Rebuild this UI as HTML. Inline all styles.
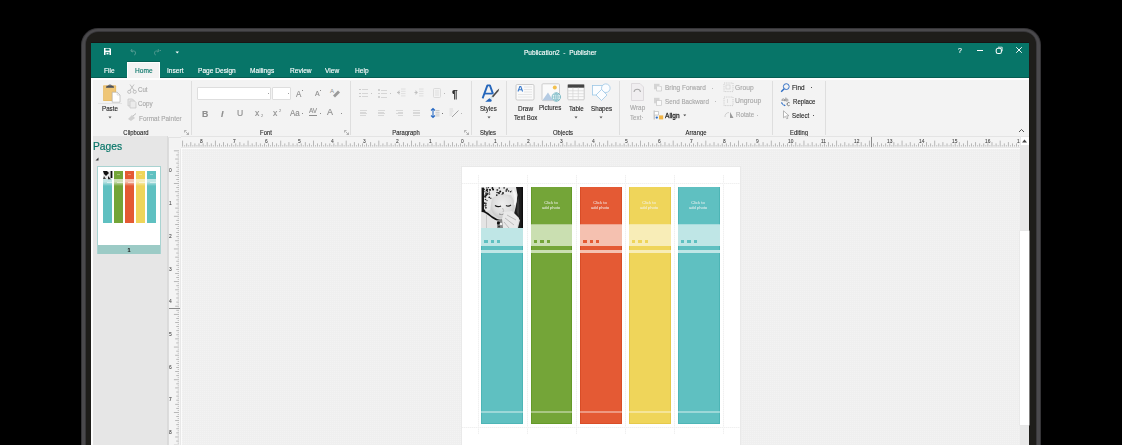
<!DOCTYPE html>
<html><head><meta charset="utf-8">
<style>
*{margin:0;padding:0;box-sizing:border-box}
html,body{width:1122px;height:445px;overflow:hidden;background:#000;font-family:"Liberation Sans",sans-serif;position:relative}
.a{position:absolute}
.t{white-space:nowrap;-webkit-text-stroke:0.018em currentColor}
svg{overflow:visible}
</style></head><body>
<div class="a" style="left:80.8px;top:27.7px;width:960px;height:600px;border-radius:17px;background:#353437"></div>
<div class="a" style="left:82px;top:28.6px;width:957.5px;height:600px;border-radius:16px;background:#4a494c;filter:blur(0.5px)"></div>
<div class="a" style="left:84.6px;top:30.6px;width:952px;height:600px;border-radius:14px;background:#38373a;filter:blur(0.4px)"></div>
<div class="a" style="left:86px;top:31.7px;width:950px;height:600px;border-radius:12px;background:#1e1d1a"></div>
<div class="a" style="left:91px;top:42px;width:938px;height:1px;background:#181514;"></div>
<div class="a" style="left:91px;top:43px;width:938px;height:402px;background:#f3f3f3;"></div>
<div class="a" style="left:91px;top:43px;width:938px;height:35px;background:#077568;"></div>
<svg class="a" style="left:104px;top:48px;" width="7" height="7" viewBox="0 0 7 7"><path d="M0 0H6L7 1V7H0Z" fill="#fff"/><rect x="1.5" y="0.6" width="4" height="2" fill="#077568"/><rect x="1.5" y="4.2" width="4" height="2.8" fill="#077568"/><rect x="2.5" y="4.8" width="2" height="1.6" fill="#fff"/></svg>
<svg class="a" style="left:130px;top:48px;" width="8" height="7" viewBox="0 0 8 7"><path d="M2 1L0.8 3L3 4M1 3H4.5A2.5 2.5 0 0 1 4.5 7H4" fill="none" stroke="#5a9e95" stroke-width="0.9"/></svg>
<svg class="a" style="left:152px;top:48px;" width="8" height="7" viewBox="0 0 8 7"><path d="M6 1L7.2 3L5 4M7 3H3.5A2.5 2.5 0 0 0 3.5 7H4" fill="none" stroke="#4f978d" stroke-width="0.9"/></svg>
<div class="a" style="left:160px;top:50px;width:1.2px;height:0.8px;background:#4f978d;"></div>
<svg class="a" style="left:175px;top:50px;" width="5" height="4" viewBox="0 0 5 4"><path d="M0.5 1.5H4L2.25 3.5Z" fill="#fff"/></svg>
<div class="a t" style="left:523.50px;top:-1.17px;font-size:65.50px;line-height:65.50px;color:#fff;transform-origin:0 55.67px;transform:scale(0.1,0.1080);">Publication2&nbsp; -&nbsp; Publisher</div>
<div class="a t" style="left:957.50px;top:-6.50px;font-size:70.00px;line-height:70.00px;color:#fff;transform-origin:0 59.50px;transform:scale(0.1,0.1080);">?</div>
<div class="a" style="left:977px;top:50px;width:6px;height:1px;background:#fff;"></div>
<svg class="a" style="left:995px;top:46px;" width="9" height="8" viewBox="0 0 9 8"><rect x="1.2" y="2.3" width="5.2" height="5.2" rx="1.8" fill="none" stroke="#fff" stroke-width="1.05"/><path d="M3 1.2H7.2V5.2" fill="none" stroke="#fff" stroke-width="0.75"/></svg>
<svg class="a" style="left:1015px;top:46px;" width="8" height="8" viewBox="0 0 8 8"><path d="M1.2 1.2L6.8 6.8M6.8 1.2L1.2 6.8" stroke="#fff" stroke-width="0.95"/></svg>
<div class="a" style="left:91px;top:77px;width:938px;height:1px;background:#065e53;"></div>
<div class="a" style="left:127px;top:61px;width:33px;height:1px;background:#066055;"></div>
<div class="a" style="left:127px;top:62px;width:33px;height:17px;background:#f3f3f3;border:1px solid #fff;border-bottom:none"></div>
<div class="a t" style="left:103.80px;top:16.60px;font-size:66.00px;line-height:66.00px;color:#fff;transform-origin:0 56.10px;transform:scale(0.1,0.1080);">File</div>
<div class="a t" style="left:134.60px;top:16.60px;font-size:66.00px;line-height:66.00px;color:#077568;transform-origin:0 56.10px;transform:scale(0.1,0.1080);">Home</div>
<div class="a t" style="left:167.40px;top:16.60px;font-size:66.00px;line-height:66.00px;color:#fff;transform-origin:0 56.10px;transform:scale(0.1,0.1080);">Insert</div>
<div class="a t" style="left:198.40px;top:16.60px;font-size:66.00px;line-height:66.00px;color:#fff;transform-origin:0 56.10px;transform:scale(0.1,0.1080);">Page Design</div>
<div class="a t" style="left:249.80px;top:16.60px;font-size:66.00px;line-height:66.00px;color:#fff;transform-origin:0 56.10px;transform:scale(0.1,0.1080);">Mailings</div>
<div class="a t" style="left:289.90px;top:16.60px;font-size:66.00px;line-height:66.00px;color:#fff;transform-origin:0 56.10px;transform:scale(0.1,0.1080);">Review</div>
<div class="a t" style="left:325.40px;top:16.60px;font-size:66.00px;line-height:66.00px;color:#fff;transform-origin:0 56.10px;transform:scale(0.1,0.1080);">View</div>
<div class="a t" style="left:354.80px;top:16.60px;font-size:66.00px;line-height:66.00px;color:#fff;transform-origin:0 56.10px;transform:scale(0.1,0.1080);">Help</div>
<div class="a" style="left:91px;top:78px;width:938px;height:58px;background:#f3f3f3;"></div>
<div class="a" style="left:91px;top:78px;width:938px;height:1.5px;background:#fdfdfd;"></div>
<div class="a" style="left:91px;top:78px;width:2px;height:367px;background:#fdfdfd;"></div>
<div class="a" style="left:191px;top:81px;width:1px;height:54px;background:#dedede;"></div>
<div class="a" style="left:350px;top:81px;width:1px;height:54px;background:#dedede;"></div>
<div class="a" style="left:471px;top:81px;width:1px;height:54px;background:#dedede;"></div>
<div class="a" style="left:506px;top:81px;width:1px;height:54px;background:#dedede;"></div>
<div class="a" style="left:619px;top:81px;width:1px;height:54px;background:#dedede;"></div>
<div class="a" style="left:772px;top:81px;width:1px;height:54px;background:#dedede;"></div>
<div class="a" style="left:825px;top:81px;width:1px;height:54px;background:#dedede;"></div>
<div class="a t" style="left:-863.70px;width:2000px;text-align:center;top:84.75px;font-size:59.00px;line-height:59.00px;color:#262626;transform-origin:1000px 50.15px;transform:scale(0.1,0.1080);">Clipboard</div>
<div class="a t" style="left:-734.00px;width:2000px;text-align:center;top:84.75px;font-size:59.00px;line-height:59.00px;color:#262626;transform-origin:1000px 50.15px;transform:scale(0.1,0.1080);">Font</div>
<div class="a t" style="left:-594.50px;width:2000px;text-align:center;top:84.75px;font-size:59.00px;line-height:59.00px;color:#262626;transform-origin:1000px 50.15px;transform:scale(0.1,0.1080);">Paragraph</div>
<div class="a t" style="left:-511.70px;width:2000px;text-align:center;top:84.75px;font-size:59.00px;line-height:59.00px;color:#262626;transform-origin:1000px 50.15px;transform:scale(0.1,0.1080);">Styles</div>
<div class="a t" style="left:-437.20px;width:2000px;text-align:center;top:84.75px;font-size:59.00px;line-height:59.00px;color:#262626;transform-origin:1000px 50.15px;transform:scale(0.1,0.1080);">Objects</div>
<div class="a t" style="left:-304.50px;width:2000px;text-align:center;top:84.75px;font-size:59.00px;line-height:59.00px;color:#262626;transform-origin:1000px 50.15px;transform:scale(0.1,0.1080);">Arrange</div>
<div class="a t" style="left:-201.20px;width:2000px;text-align:center;top:84.75px;font-size:59.00px;line-height:59.00px;color:#262626;transform-origin:1000px 50.15px;transform:scale(0.1,0.1080);">Editing</div>
<svg class="a" style="left:184px;top:130px;" width="5" height="5" viewBox="0 0 5 5"><path d="M0.5 0.5H2.5M0.5 0.5V2.5M4.5 4.5L1.5 1.5M4.5 2.5V4.5H2.5" fill="none" stroke="#8a8a8a" stroke-width="0.6"/></svg>
<svg class="a" style="left:344px;top:130px;" width="5" height="5" viewBox="0 0 5 5"><path d="M0.5 0.5H2.5M0.5 0.5V2.5M4.5 4.5L1.5 1.5M4.5 2.5V4.5H2.5" fill="none" stroke="#8a8a8a" stroke-width="0.6"/></svg>
<svg class="a" style="left:464px;top:130px;" width="5" height="5" viewBox="0 0 5 5"><path d="M0.5 0.5H2.5M0.5 0.5V2.5M4.5 4.5L1.5 1.5M4.5 2.5V4.5H2.5" fill="none" stroke="#8a8a8a" stroke-width="0.6"/></svg>
<svg class="a" style="left:1018px;top:128px;" width="7" height="5" viewBox="0 0 7 5"><path d="M1 4L3.5 1.5L6 4" fill="none" stroke="#444" stroke-width="0.9"/></svg>
<svg class="a" style="left:102px;top:82px;" width="20" height="22" viewBox="0 0 20 22"><rect x="1.3" y="3.6" width="12.8" height="15.4" rx="0.6" fill="#efc677"/><rect x="1.6" y="3.9" width="12.2" height="14.8" fill="none" stroke="#e2b35c" stroke-width="0.5"/><path d="M3.9 5.8L4.6 3.8H6.2A1.9 1.9 0 0 1 9.8 3.8H11.4L12.1 5.8Z" fill="#4a4f5a"/><circle cx="8" cy="3" r="0.5" fill="#e8e8e8"/><path d="M10.2 10.2H15.2L18 13V20.2H10.2Z" fill="#fff" stroke="#a8a8a8" stroke-width="0.6"/><path d="M15.2 10.2V13H18" fill="none" stroke="#bbb" stroke-width="0.5"/></svg>
<div class="a" style="left:98px;top:103px;width:24px;height:1px;background:#e4e4e4;"></div>
<div class="a t" style="left:102.20px;top:58.10px;font-size:62.00px;line-height:62.00px;color:#262626;transform-origin:0 52.70px;transform:scale(0.1,0.1080);">Paste</div>
<svg class="a" style="left:107.5px;top:115.5px;" width="4" height="3" viewBox="0 0 4 3"><path d="M0.5 0.5H3.5L2 2.5Z" fill="#555"/></svg>
<svg class="a" style="left:127px;top:84px;" width="10" height="10" viewBox="0 0 10 10"><path d="M3 0.5L7.5 7M7 0.5L2.5 7" stroke="#b4b4b4" stroke-width="0.8" fill="none"/><circle cx="2.3" cy="7.8" r="1.6" fill="none" stroke="#b4b4b4" stroke-width="0.8"/><circle cx="7.7" cy="7.8" r="1.6" fill="none" stroke="#b4b4b4" stroke-width="0.8"/></svg>
<div class="a t" style="left:138.40px;top:39.65px;font-size:61.00px;line-height:61.00px;color:#a8a8a8;transform-origin:0 51.85px;transform:scale(0.1,0.1080);">Cut</div>
<svg class="a" style="left:127px;top:98px;" width="10" height="11" viewBox="0 0 10 11"><path d="M1 1H5.5L7 2.5V8H1Z" fill="#e6e6e6" stroke="#c4c4c4" stroke-width="0.7"/><path d="M3 3H7.5L9 4.5V10H3Z" fill="#ececec" stroke="#c4c4c4" stroke-width="0.7"/></svg>
<div class="a t" style="left:138.40px;top:52.95px;font-size:63.00px;line-height:63.00px;color:#a8a8a8;transform-origin:0 53.55px;transform:scale(0.1,0.1080);">Copy</div>
<svg class="a" style="left:127px;top:113px;" width="10" height="9" viewBox="0 0 10 9"><path d="M1 6L5 2L8 5L4 8Z" fill="#d0d0d0"/><path d="M6 3L9 0.5" stroke="#b8b8b8" stroke-width="0.9"/></svg>
<div class="a t" style="left:138.80px;top:66.18px;font-size:64.50px;line-height:64.50px;color:#a8a8a8;transform-origin:0 54.82px;transform:scale(0.1,0.1080);">Format Painter</div>
<div class="a" style="left:196.5px;top:87px;width:74px;height:13px;background:#fff;border:1px solid #dedede;border-radius:1px"></div>
<div class="a" style="left:271.5px;top:87px;width:19px;height:13px;background:#fff;border:1px solid #dedede;border-radius:1px"></div>
<div class="a" style="left:268.3px;top:92.6px;width:1px;height:1px;background:#a0a0a0;"></div>
<div class="a" style="left:287.8px;top:92.6px;width:1px;height:1px;background:#a0a0a0;"></div>
<div class="a t" style="left:296.30px;top:28.60px;font-size:80.00px;line-height:80.00px;color:#8e8e8e;transform-origin:0 68.00px;transform:scale(0.1,0.1080);">A</div>
<div class="a" style="left:301.5px;top:89.5px;width:1.2px;height:1.2px;background:#8e8e8e;"></div>
<div class="a t" style="left:314.60px;top:37.10px;font-size:70.00px;line-height:70.00px;color:#8e8e8e;transform-origin:0 59.50px;transform:scale(0.1,0.1080);">A</div>
<div class="a" style="left:319.6px;top:89.5px;width:1.2px;height:0.8px;background:#8e8e8e;"></div>
<svg class="a" style="left:330px;top:87px;" width="11" height="10" viewBox="0 0 11 10"><text x="0" y="5.5" font-size="6" font-family="Liberation Sans" fill="#8e8e8e">A</text><path d="M3 8.5L8 3.5L10 5.5L5 10.5Z" fill="#9a9a9a"/></svg>
<div class="a t" style="left:201.80px;top:41.80px;font-size:88.00px;line-height:88.00px;color:#8e8e8e;transform-origin:0 74.80px;transform:scale(0.1,0.1080);font-weight:bold">B</div>
<div class="a t" style="left:220.60px;top:41.80px;font-size:88.00px;line-height:88.00px;color:#8e8e8e;transform-origin:0 74.80px;transform:scale(0.1,0.1080);font-style:italic;font-weight:bold">I</div>
<div class="a t" style="left:237.00px;top:43.30px;font-size:86.00px;line-height:86.00px;color:#8e8e8e;transform-origin:0 73.10px;transform:scale(0.1,0.1080);">U</div>
<div class="a t" style="left:254.70px;top:42.80px;font-size:86.00px;line-height:86.00px;color:#8e8e8e;transform-origin:0 73.10px;transform:scale(0.1,0.1080);">x</div>
<div class="a t" style="left:260.50px;top:83.00px;font-size:40.00px;line-height:40.00px;color:#8e8e8e;transform-origin:0 34.00px;transform:scale(0.1,0.1080);">2</div>
<div class="a t" style="left:273.00px;top:42.80px;font-size:86.00px;line-height:86.00px;color:#8e8e8e;transform-origin:0 73.10px;transform:scale(0.1,0.1080);">x</div>
<div class="a t" style="left:278.60px;top:77.50px;font-size:40.00px;line-height:40.00px;color:#8e8e8e;transform-origin:0 34.00px;transform:scale(0.1,0.1080);">2</div>
<div class="a t" style="left:289.80px;top:47.90px;font-size:80.00px;line-height:80.00px;color:#8e8e8e;transform-origin:0 68.00px;transform:scale(0.1,0.1080);">Aa</div>
<div class="a" style="left:301.5px;top:112.5px;width:1px;height:1px;background:#8e8e8e;"></div>
<div class="a t" style="left:309.00px;top:58.05px;font-size:65.00px;line-height:65.00px;color:#8e8e8e;transform-origin:0 55.25px;transform:scale(0.1,0.1080);">AV</div>
<div class="a" style="left:309.3px;top:114.8px;width:7.5px;height:0.8px;background:#8e8e8e;"></div>
<div class="a" style="left:320px;top:112.5px;width:1px;height:1px;background:#8e8e8e;"></div>
<div class="a t" style="left:327.40px;top:39.40px;font-size:90.00px;line-height:90.00px;color:#8e8e8e;transform-origin:0 76.50px;transform:scale(0.1,0.1080);">A</div>
<div class="a" style="left:341px;top:112.5px;width:1px;height:1px;background:#8e8e8e;"></div>
<div class="a" style="left:359.3px;top:89.0px;width:1.4px;height:1.4px;background:#cbcbcb;"></div>
<div class="a" style="left:362px;top:89.4px;width:5.5px;height:0.8px;background:#d6d6d6;"></div>
<div class="a" style="left:359.3px;top:92.5px;width:1.4px;height:1.4px;background:#cbcbcb;"></div>
<div class="a" style="left:362px;top:92.9px;width:5.5px;height:0.8px;background:#d6d6d6;"></div>
<div class="a" style="left:359.3px;top:96.0px;width:1.4px;height:1.4px;background:#cbcbcb;"></div>
<div class="a" style="left:362px;top:96.4px;width:5.5px;height:0.8px;background:#d6d6d6;"></div>
<div class="a" style="left:370.5px;top:92.6px;width:1px;height:1px;background:#c4c4c4;"></div>
<div class="a" style="left:378.3px;top:89.0px;width:1.3px;height:1.5px;background:#d0d0d0;"></div>
<div class="a" style="left:381px;top:89.6px;width:5.5px;height:0.8px;background:#d6d6d6;"></div>
<div class="a" style="left:378.3px;top:92.5px;width:1.3px;height:1.5px;background:#d0d0d0;"></div>
<div class="a" style="left:381px;top:93.1px;width:5.5px;height:0.8px;background:#d6d6d6;"></div>
<div class="a" style="left:378.3px;top:96.0px;width:1.3px;height:1.5px;background:#d0d0d0;"></div>
<div class="a" style="left:381px;top:96.6px;width:5.5px;height:0.8px;background:#d6d6d6;"></div>
<div class="a" style="left:389.5px;top:92.6px;width:1px;height:1px;background:#c4c4c4;"></div>
<svg class="a" style="left:396px;top:88px;" width="10" height="10" viewBox="0 0 10 10"><path d="M1 4.5L3.5 2V7Z" fill="#c8c8c8"/><path d="M5 1H9.5M5 3.3H9.5M5 5.6H9.5M5 7.9H9.5" stroke="#dcdcdc" stroke-width="0.9"/><path d="M1 4.5H4" stroke="#bcbcbc" stroke-width="0.9"/></svg>
<svg class="a" style="left:414px;top:88px;" width="10" height="10" viewBox="0 0 10 10"><path d="M4 4.5L1.5 2V7Z" fill="#c8c8c8"/><path d="M5 1H9.5M5 3.3H9.5M5 5.6H9.5M5 7.9H9.5" stroke="#dcdcdc" stroke-width="0.9"/><path d="M0.5 4.5H3" stroke="#bcbcbc" stroke-width="0.9"/></svg>
<svg class="a" style="left:432.5px;top:88px;" width="8" height="10" viewBox="0 0 8 10"><rect x="0.5" y="0.5" width="7" height="9" rx="1" fill="none" stroke="#d4d4d4" stroke-width="0.8"/><path d="M2 3H6M2 5H6M2 7H6" stroke="#d8d8d8" stroke-width="0.7"/></svg>
<div class="a" style="left:443.8px;top:92.6px;width:1px;height:1px;background:#b8b8b8;"></div>
<div class="a t" style="left:452.30px;top:12.50px;font-size:100.00px;line-height:100.00px;color:#2e2e2e;transform-origin:0 85.00px;transform:scale(0.1,0.1080);font-weight:bold">&para;</div>
<div class="a" style="left:360px;top:109.8px;width:7px;height:0.9px;background:#d8d8d8;"></div>
<div class="a" style="left:360px;top:111.6px;width:5.5px;height:0.9px;background:#d8d8d8;"></div>
<div class="a" style="left:360px;top:113.39999999999999px;width:7px;height:0.9px;background:#d8d8d8;"></div>
<div class="a" style="left:360px;top:115.2px;width:5.5px;height:0.9px;background:#d8d8d8;"></div>
<div class="a" style="left:377.5px;top:109.8px;width:7px;height:0.9px;background:#d8d8d8;"></div>
<div class="a" style="left:378.0px;top:111.6px;width:6px;height:0.9px;background:#d8d8d8;"></div>
<div class="a" style="left:377.5px;top:113.39999999999999px;width:7px;height:0.9px;background:#d8d8d8;"></div>
<div class="a" style="left:378.0px;top:115.2px;width:6px;height:0.9px;background:#d8d8d8;"></div>
<div class="a" style="left:396px;top:109.8px;width:7px;height:0.9px;background:#d8d8d8;"></div>
<div class="a" style="left:397.5px;top:111.6px;width:5.5px;height:0.9px;background:#d8d8d8;"></div>
<div class="a" style="left:396px;top:113.39999999999999px;width:7px;height:0.9px;background:#d8d8d8;"></div>
<div class="a" style="left:397.5px;top:115.2px;width:5.5px;height:0.9px;background:#d8d8d8;"></div>
<div class="a" style="left:413px;top:109.8px;width:7px;height:0.9px;background:#d8d8d8;"></div>
<div class="a" style="left:413px;top:111.6px;width:7px;height:0.9px;background:#d8d8d8;"></div>
<div class="a" style="left:413px;top:113.39999999999999px;width:7px;height:0.9px;background:#d8d8d8;"></div>
<div class="a" style="left:413px;top:115.2px;width:7px;height:0.9px;background:#d8d8d8;"></div>
<svg class="a" style="left:430px;top:108px;" width="13" height="10" viewBox="0 0 13 10"><path d="M3 0.5V9.5M1 2.5L3 0.5L5 2.5M1 7.5L3 9.5L5 7.5" fill="none" stroke="#2b6cc4" stroke-width="1.1"/><path d="M5.5 2.5H9.5M5.5 4.3H9.5M5.5 6.1H9.5M5.5 7.9H9.5" stroke="#c4c4c4" stroke-width="0.9"/></svg>
<div class="a" style="left:442px;top:112.5px;width:1px;height:1px;background:#777;"></div>
<svg class="a" style="left:449px;top:108px;" width="11" height="10" viewBox="0 0 11 10"><path d="M0.5 1H4M0.5 3H4.5M0.5 5H3.5M0.5 7H3" stroke="#d4d4d4" stroke-width="0.8"/><path d="M3 9L9.5 2.5" stroke="#999" stroke-width="0.9"/></svg>
<div class="a" style="left:461.2px;top:112.5px;width:1px;height:1px;background:#b8b8b8;"></div>
<svg class="a" style="left:480px;top:83px;" width="21" height="20" viewBox="0 0 21 20"><path d="M2.6 15.4L7.4 2.4H9.9L13 10.8" fill="none" stroke="#2566bb" stroke-width="1.9" stroke-linejoin="round"/><path d="M4.6 10.6H12.6" stroke="#2566bb" stroke-width="1.7"/><path d="M11.6 13.6L17.2 7.2L19.2 5.4L18.6 8L13 14.6Z" fill="#4a4a4a"/><path d="M10.2 14.2L12.6 13.6L12.4 15.6L10.8 16.2Z" fill="#cfe6ee"/><path d="M5.2 18.7L9.4 15.2L11.8 17L11.2 18.7Z" fill="#2566bb"/></svg>
<div class="a t" style="left:480.20px;top:58.52px;font-size:61.50px;line-height:61.50px;color:#262626;transform-origin:0 52.27px;transform:scale(0.1,0.1080);">Styles</div>
<svg class="a" style="left:486.5px;top:115.5px;" width="4" height="3" viewBox="0 0 4 3"><path d="M0.5 0.5H3.5L2 2.5Z" fill="#555"/></svg>
<svg class="a" style="left:515px;top:84px;" width="20" height="17" viewBox="0 0 20 17"><rect x="1" y="0.5" width="18" height="15.5" rx="1.2" fill="#fafafa" stroke="#c6c6c6" stroke-width="0.9"/><path d="M3 7.5L4.8 2.5H5.8L7.6 7.5M3.8 5.8H6.8" stroke="#3d7ccc" stroke-width="1.1" fill="none"/><path d="M9 3H17M9 5.5H17M9 8H17M3 10.5H17M3 13H17" stroke="#dcdcdc" stroke-width="0.7"/></svg>
<div class="a t" style="left:517.60px;top:55.98px;font-size:64.50px;line-height:64.50px;color:#262626;transform-origin:0 54.82px;transform:scale(0.1,0.1080);">Draw</div>
<div class="a t" style="left:513.50px;top:67.72px;font-size:60.80px;line-height:60.80px;color:#262626;transform-origin:0 51.68px;transform:scale(0.1,0.1080);">Text Box</div>
<svg class="a" style="left:541px;top:83px;" width="21" height="19" viewBox="0 0 21 19"><rect x="1" y="0.8" width="17.5" height="16.8" rx="1" fill="#fafafa" stroke="#c8c8c8" stroke-width="0.9"/><circle cx="13.8" cy="4.6" r="2" fill="#f2c04e"/><path d="M1.5 17.2L7 9.5L12 17.2Z" fill="#b4cbe3"/><circle cx="15.3" cy="14" r="4.2" fill="#f4fafb" stroke="#6fb3c0" stroke-width="0.9"/><path d="M11.3 14H19.3M15.3 10V18M12.5 11.8H18M12.5 16.2H18" stroke="#6fb3c0" stroke-width="0.6"/><ellipse cx="15.3" cy="14" rx="1.8" ry="4" fill="none" stroke="#6fb3c0" stroke-width="0.6"/></svg>
<div class="a t" style="left:539.30px;top:58.35px;font-size:61.70px;line-height:61.70px;color:#262626;transform-origin:0 52.45px;transform:scale(0.1,0.1080);">Pictures</div>
<svg class="a" style="left:567px;top:84px;" width="18" height="17" viewBox="0 0 18 17"><rect x="0.8" y="0.5" width="16.4" height="15.3" rx="0.8" fill="#fafafa" stroke="#c0c0c0" stroke-width="0.8"/><rect x="0.8" y="0.5" width="16.4" height="3.2" fill="#444"/><path d="M1 6.8H17M1 9.7H17M1 12.6H17M5.9 3.7V15.8M11.3 3.7V15.8" stroke="#d6d6d6" stroke-width="0.7"/></svg>
<div class="a t" style="left:569.00px;top:58.18px;font-size:61.90px;line-height:61.90px;color:#262626;transform-origin:0 52.62px;transform:scale(0.1,0.1080);">Table</div>
<svg class="a" style="left:573.5px;top:115.5px;" width="4" height="3" viewBox="0 0 4 3"><path d="M0.5 0.5H3.5L2 2.5Z" fill="#555"/></svg>
<svg class="a" style="left:591px;top:82px;" width="20" height="20" viewBox="0 0 20 20"><rect x="1.5" y="3.5" width="10" height="9.5" fill="#fbfdff" stroke="#9cc7e6" stroke-width="0.8"/><circle cx="14.8" cy="6.2" r="4.3" fill="#fbfdff" stroke="#9cc7e6" stroke-width="0.8"/><path d="M10.5 7.5L16 13L10.5 18.5L5 13Z" fill="#fbfdff" stroke="#9cc7e6" stroke-width="0.8"/></svg>
<div class="a t" style="left:590.80px;top:57.67px;font-size:62.50px;line-height:62.50px;color:#262626;transform-origin:0 53.12px;transform:scale(0.1,0.1080);">Shapes</div>
<svg class="a" style="left:599px;top:115.5px;" width="4" height="3" viewBox="0 0 4 3"><path d="M0.5 0.5H3.5L2 2.5Z" fill="#555"/></svg>
<svg class="a" style="left:630px;top:82px;" width="15" height="20" viewBox="0 0 15 20"><path d="M1.5 1.5H10L13.5 5V18.5H1.5Z" fill="#f0eef0" stroke="#d8d4d8" stroke-width="0.8"/><path d="M4 10A3.3 3.3 0 0 1 10.5 10" fill="none" stroke="#a9a9a9" stroke-width="1.1"/></svg>
<div class="a t" style="left:629.60px;top:56.32px;font-size:64.10px;line-height:64.10px;color:#a8a8a8;transform-origin:0 54.48px;transform:scale(0.1,0.1080);">Wrap</div>
<div class="a t" style="left:630.00px;top:66.70px;font-size:62.00px;line-height:62.00px;color:#a8a8a8;transform-origin:0 52.70px;transform:scale(0.1,0.1080);">Text</div>
<div class="a" style="left:641.5px;top:116.5px;width:1px;height:1px;background:#c0c0c0;"></div>
<svg class="a" style="left:653px;top:83px;" width="10" height="9" viewBox="0 0 10 9"><rect x="1" y="0.8" width="5.5" height="5.5" fill="#d4d4d4"/><path d="M3.5 3.5V8H8.5V3.5H6.5" fill="#f6f6f6" stroke="#c8c8c8" stroke-width="0.7"/></svg>
<div class="a t" style="left:664.50px;top:34.85px;font-size:65.00px;line-height:65.00px;color:#a8a8a8;transform-origin:0 55.25px;transform:scale(0.1,0.1080);">Bring Forward</div>
<div class="a" style="left:711.8px;top:87.5px;width:1px;height:1px;background:#bdbdbd;"></div>
<svg class="a" style="left:653px;top:97px;" width="10" height="9" viewBox="0 0 10 9"><rect x="1" y="0.8" width="5.5" height="5.5" fill="#d4d4d4"/><rect x="3.5" y="3.5" width="5" height="4.8" fill="#fafafa" stroke="#c8c8c8" stroke-width="0.7"/></svg>
<div class="a t" style="left:664.50px;top:50.51px;font-size:62.70px;line-height:62.70px;color:#a8a8a8;transform-origin:0 53.29px;transform:scale(0.1,0.1080);">Send Backward</div>
<div class="a" style="left:715px;top:101px;width:1px;height:1px;background:#bdbdbd;"></div>
<svg class="a" style="left:653px;top:110px;" width="11" height="10" viewBox="0 0 11 10"><path d="M1.2 0.5V9.5" stroke="#9a9a9a" stroke-width="0.7"/><path d="M1.8 1.5H5.5V5H1.8" fill="#fff" stroke="#b0b0b0" stroke-width="0.6"/><circle cx="3.8" cy="7.6" r="1.15" fill="#2b6cc4"/><rect x="6" y="5.4" width="4.2" height="4" fill="#f0b445"/></svg>
<div class="a t" style="left:665.00px;top:61.90px;font-size:66.00px;line-height:66.00px;color:#222;transform-origin:0 56.10px;transform:scale(0.1,0.1080);-webkit-text-stroke:0.035em #222">Align</div>
<svg class="a" style="left:683px;top:114px;" width="4" height="3" viewBox="0 0 4 3"><path d="M0.3 0.5H3.2L1.75 2.2Z" fill="#444"/></svg>
<svg class="a" style="left:723px;top:82px;" width="11" height="10" viewBox="0 0 11 10"><rect x="1" y="1" width="9" height="8.6" fill="none" stroke="#c4c4c4" stroke-width="0.8" stroke-dasharray="1.2 1"/><rect x="3" y="3" width="4" height="4" fill="none" stroke="#d0d0d0" stroke-width="0.7"/></svg>
<div class="a t" style="left:735.20px;top:32.89px;font-size:67.30px;line-height:67.30px;color:#a8a8a8;transform-origin:0 57.21px;transform:scale(0.1,0.1080);">Group</div>
<svg class="a" style="left:723px;top:96px;" width="11" height="10" viewBox="0 0 11 10"><rect x="1" y="1" width="9" height="8.6" fill="none" stroke="#c4c4c4" stroke-width="0.8" stroke-dasharray="1.2 1"/><path d="M4.5 3V7" stroke="#d0d0d0" stroke-width="0.7"/></svg>
<div class="a t" style="left:735.20px;top:45.49px;font-size:68.60px;line-height:68.60px;color:#a8a8a8;transform-origin:0 58.31px;transform:scale(0.1,0.1080);">Ungroup</div>
<svg class="a" style="left:724px;top:111px;" width="10" height="8" viewBox="0 0 10 8"><path d="M1 6A4 4 0 0 1 5 1.5" fill="none" stroke="#c0c0c0" stroke-width="0.7"/><path d="M6 1L9.5 7H6Z" fill="#9a9a9a"/></svg>
<div class="a t" style="left:735.70px;top:64.87px;font-size:61.80px;line-height:61.80px;color:#a8a8a8;transform-origin:0 52.53px;transform:scale(0.1,0.1080);">Rotate</div>
<div class="a" style="left:757px;top:114.8px;width:1px;height:1px;background:#bdbdbd;"></div>
<svg class="a" style="left:780px;top:82px;" width="11" height="11" viewBox="0 0 11 11"><circle cx="6.3" cy="4.6" r="2.9" fill="none" stroke="#2b6cc4" stroke-width="0.95"/><path d="M4.2 6.8L1.2 9.8" stroke="#2b6cc4" stroke-width="1.4"/></svg>
<div class="a t" style="left:791.70px;top:35.02px;font-size:64.80px;line-height:64.80px;color:#262626;transform-origin:0 55.08px;transform:scale(0.1,0.1080);">Find</div>
<div class="a" style="left:811px;top:87.2px;width:1.2px;height:1px;background:#555;"></div>
<svg class="a" style="left:781px;top:97px;" width="10" height="10" viewBox="0 0 10 10"><path d="M0.8 3.6Q0.8 1.8 2.4 1.8Q3.6 1.8 3.6 3.6M3.6 2.2V4.2M0.9 3.3H3.4M4.8 0.5V4.2M4.8 3.1A1.1 1.1 0 1 0 7 3.1A1.1 1.1 0 1 0 4.8 3.1" fill="none" stroke="#8a8a8a" stroke-width="0.75"/><path d="M0.8 5.6Q1.2 8.6 4 8.4" fill="none" stroke="#2b6cc4" stroke-width="0.8"/><path d="M0 6.6L0.8 5L1.8 6.6Z" fill="#2b6cc4"/><path d="M8.6 5.8A1.6 1.6 0 1 0 8.6 8.4" fill="none" stroke="#555" stroke-width="0.8"/><path d="M3.2 7.6L4.8 8.4L3.2 9.2Z" fill="#2b6cc4"/></svg>
<div class="a t" style="left:792.70px;top:52.12px;font-size:60.80px;line-height:60.80px;color:#262626;transform-origin:0 51.68px;transform:scale(0.1,0.1080);">Replace</div>
<svg class="a" style="left:782px;top:110px;" width="8" height="9" viewBox="0 0 8 9"><path d="M1.5 0.8V7.8L3.3 6.3L4.8 8.8L6 8.2L4.6 5.8H7Z" fill="#fff" stroke="#8a8a8a" stroke-width="0.6"/></svg>
<div class="a t" style="left:792.20px;top:64.78px;font-size:61.90px;line-height:61.90px;color:#262626;transform-origin:0 52.62px;transform:scale(0.1,0.1080);">Select</div>
<div class="a" style="left:812.5px;top:114.8px;width:1px;height:1px;background:#555;"></div>
<div class="a" style="left:93px;top:136px;width:74px;height:309px;background:#e6e6e6;"></div>
<div class="a" style="left:167px;top:136px;width:1px;height:309px;background:#dadada;"></div>
<div class="a t" style="left:93.40px;top:63.45px;font-size:103.00px;line-height:103.00px;color:#077568;transform-origin:0 87.55px;transform:scale(0.1,0.1100);">Pages</div>
<svg class="a" style="left:95px;top:157px;" width="4" height="4" viewBox="0 0 4 4"><path d="M3.5 0.5V3.5H0.5Z" fill="#333"/></svg>
<div class="a" style="left:97px;top:165.6px;width:63.5px;height:88.5px;border:1.2px solid #a9d3d1;background:#fff"></div>
<div class="a" style="left:98px;top:245px;width:62px;height:9px;background:#9ccbc6;"></div>
<div class="a t" style="left:-870.70px;width:2000px;text-align:center;top:204.20px;font-size:56.00px;line-height:56.00px;color:#1a1a1a;transform-origin:1000px 47.60px;transform:scale(0.1,0.1080);font-weight:bold">1</div>
<div class="a" style="left:103.10px;top:170.7px;width:9.4px;height:52px;background:#5fc0c1;"></div>
<div class="a" style="left:103.10px;top:178.8px;width:9.4px;height:7.4px;background:linear-gradient(#c0e6e6,#c0e6e6 40%,#5fc0c1);"></div>
<div class="a" style="left:106.60px;top:181.8px;width:5.5px;height:0.8px;background:#fff;opacity:.5"></div>
<div class="a" style="left:113.95px;top:170.7px;width:9.4px;height:52px;background:#74a538;"></div>
<div class="a" style="left:113.95px;top:178.8px;width:9.4px;height:7.4px;background:linear-gradient(#cde0b4,#cde0b4 40%,#74a538);"></div>
<div class="a" style="left:117.45px;top:181.8px;width:5.5px;height:0.8px;background:#fff;opacity:.5"></div>
<div class="a" style="left:116.95px;top:173.5px;width:3.4px;height:1.2px;background:rgba(255,255,255,.3);"></div>
<div class="a" style="left:124.80px;top:170.7px;width:9.4px;height:52px;background:#e45a34;"></div>
<div class="a" style="left:124.80px;top:178.8px;width:9.4px;height:7.4px;background:linear-gradient(#f5c3b2,#f5c3b2 40%,#e45a34);"></div>
<div class="a" style="left:128.30px;top:181.8px;width:5.5px;height:0.8px;background:#fff;opacity:.5"></div>
<div class="a" style="left:127.80px;top:173.5px;width:3.4px;height:1.2px;background:rgba(255,255,255,.3);"></div>
<div class="a" style="left:135.65px;top:170.7px;width:9.4px;height:52px;background:#efd55a;"></div>
<div class="a" style="left:135.65px;top:178.8px;width:9.4px;height:7.4px;background:linear-gradient(#f8eeb9,#f8eeb9 40%,#efd55a);"></div>
<div class="a" style="left:139.15px;top:181.8px;width:5.5px;height:0.8px;background:#fff;opacity:.5"></div>
<div class="a" style="left:138.65px;top:173.5px;width:3.4px;height:1.2px;background:rgba(255,255,255,.3);"></div>
<div class="a" style="left:146.50px;top:170.7px;width:9.4px;height:52px;background:#5fc0c1;"></div>
<div class="a" style="left:146.50px;top:178.8px;width:9.4px;height:7.4px;background:linear-gradient(#c0e6e6,#c0e6e6 40%,#5fc0c1);"></div>
<div class="a" style="left:150.00px;top:181.8px;width:5.5px;height:0.8px;background:#fff;opacity:.5"></div>
<div class="a" style="left:149.50px;top:173.5px;width:3.4px;height:1.2px;background:rgba(255,255,255,.3);"></div>
<svg class="a" style="left:103px;top:170.7px;" width="9.4" height="8.2" viewBox="0 0 9.4 8.2"><rect width="9.4" height="8.2" fill="#e8e8e8"/><path d="M0 0H4L6 2L3 5L1 3Z" fill="#111"/><path d="M5 5L8 8.2H5Z" fill="#222"/><rect x="7.6" y="0" width="1.8" height="7" fill="#111"/><path d="M1 5L3 8H0Z" fill="#444"/></svg>
<div class="a" style="left:167.5px;top:136.5px;width:14px;height:13px;background:#f3f3f3;border-left:1px solid #dcdcdc;border-top:1px solid #e2e2e2;border-right:1px solid #e6e6e6;border-bottom:1px solid #e6e6e6"></div>
<div class="a" style="left:181px;top:136px;width:839px;height:1px;background:#e4e4e4;"></div>
<div class="a" style="left:181px;top:137px;width:839px;height:10px;background:#f4f4f4;"></div>
<div class="a" style="left:181px;top:147px;width:839px;height:1px;background:#e8e8e8;"></div>
<div class="a" style="left:181px;top:148px;width:839px;height:1px;background:#fbfbfb;"></div>
<div class="a" style="left:168px;top:149px;width:13px;height:296px;background:#f4f4f4;"></div>
<div class="a" style="left:167.5px;top:149px;width:1px;height:296px;background:#dcdcdc;"></div>
<div class="a" style="left:179.5px;top:149px;width:1px;height:296px;background:#e8e8e8;"></div>
<div class="a" style="left:180.5px;top:149px;width:1px;height:296px;background:#fbfbfb;"></div>
<div class="a" style="left:181.5px;top:149px;width:838.5px;height:296px;background:#eeeeee;background-image:linear-gradient(90deg,transparent 1px,#efefef 1px),linear-gradient(transparent 1px,#efefef 1px);background-size:2px 2px;background-color:#f3f3f3"></div>
<svg class="a" style="left:181px;top:136px;" width="839" height="13" viewBox="0 0 839 13"><rect x="1.25" y="4.60" width="0.8" height="6" fill="#a8a8a8"/><rect x="3.29" y="9.00" width="0.8" height="1.6" fill="#b8b8b8"/><rect x="5.34" y="7.40" width="0.8" height="3.2" fill="#a8a8a8"/><rect x="7.38" y="9.00" width="0.8" height="1.6" fill="#b8b8b8"/><rect x="9.42" y="6.10" width="0.8" height="4.5" fill="#a8a8a8"/><rect x="11.47" y="9.00" width="0.8" height="1.6" fill="#b8b8b8"/><rect x="13.51" y="7.40" width="0.8" height="3.2" fill="#a8a8a8"/><rect x="15.56" y="9.00" width="0.8" height="1.6" fill="#b8b8b8"/><rect x="17.60" y="7.40" width="0.8" height="3.2" fill="#a8a8a8"/><rect x="19.64" y="9.00" width="0.8" height="1.6" fill="#b8b8b8"/><rect x="21.69" y="7.40" width="0.8" height="3.2" fill="#a8a8a8"/><rect x="23.73" y="9.00" width="0.8" height="1.6" fill="#b8b8b8"/><rect x="25.77" y="6.10" width="0.8" height="4.5" fill="#a8a8a8"/><rect x="27.82" y="9.00" width="0.8" height="1.6" fill="#b8b8b8"/><rect x="29.86" y="7.40" width="0.8" height="3.2" fill="#a8a8a8"/><rect x="31.91" y="9.00" width="0.8" height="1.6" fill="#b8b8b8"/><rect x="33.95" y="4.60" width="0.8" height="6" fill="#a8a8a8"/><rect x="35.99" y="9.00" width="0.8" height="1.6" fill="#b8b8b8"/><rect x="38.04" y="7.40" width="0.8" height="3.2" fill="#a8a8a8"/><rect x="40.08" y="9.00" width="0.8" height="1.6" fill="#b8b8b8"/><rect x="42.12" y="6.10" width="0.8" height="4.5" fill="#a8a8a8"/><rect x="44.17" y="9.00" width="0.8" height="1.6" fill="#b8b8b8"/><rect x="46.21" y="7.40" width="0.8" height="3.2" fill="#a8a8a8"/><rect x="48.26" y="9.00" width="0.8" height="1.6" fill="#b8b8b8"/><rect x="50.30" y="7.40" width="0.8" height="3.2" fill="#a8a8a8"/><rect x="52.34" y="9.00" width="0.8" height="1.6" fill="#b8b8b8"/><rect x="54.39" y="7.40" width="0.8" height="3.2" fill="#a8a8a8"/><rect x="56.43" y="9.00" width="0.8" height="1.6" fill="#b8b8b8"/><rect x="58.47" y="6.10" width="0.8" height="4.5" fill="#a8a8a8"/><rect x="60.52" y="9.00" width="0.8" height="1.6" fill="#b8b8b8"/><rect x="62.56" y="7.40" width="0.8" height="3.2" fill="#a8a8a8"/><rect x="64.61" y="9.00" width="0.8" height="1.6" fill="#b8b8b8"/><rect x="66.65" y="4.60" width="0.8" height="6" fill="#a8a8a8"/><rect x="68.69" y="9.00" width="0.8" height="1.6" fill="#b8b8b8"/><rect x="70.74" y="7.40" width="0.8" height="3.2" fill="#a8a8a8"/><rect x="72.78" y="9.00" width="0.8" height="1.6" fill="#b8b8b8"/><rect x="74.82" y="6.10" width="0.8" height="4.5" fill="#a8a8a8"/><rect x="76.87" y="9.00" width="0.8" height="1.6" fill="#b8b8b8"/><rect x="78.91" y="7.40" width="0.8" height="3.2" fill="#a8a8a8"/><rect x="80.96" y="9.00" width="0.8" height="1.6" fill="#b8b8b8"/><rect x="83.00" y="7.40" width="0.8" height="3.2" fill="#a8a8a8"/><rect x="85.04" y="9.00" width="0.8" height="1.6" fill="#b8b8b8"/><rect x="87.09" y="7.40" width="0.8" height="3.2" fill="#a8a8a8"/><rect x="89.13" y="9.00" width="0.8" height="1.6" fill="#b8b8b8"/><rect x="91.18" y="6.10" width="0.8" height="4.5" fill="#a8a8a8"/><rect x="93.22" y="9.00" width="0.8" height="1.6" fill="#b8b8b8"/><rect x="95.26" y="7.40" width="0.8" height="3.2" fill="#a8a8a8"/><rect x="97.31" y="9.00" width="0.8" height="1.6" fill="#b8b8b8"/><rect x="99.35" y="4.60" width="0.8" height="6" fill="#a8a8a8"/><rect x="101.39" y="9.00" width="0.8" height="1.6" fill="#b8b8b8"/><rect x="103.44" y="7.40" width="0.8" height="3.2" fill="#a8a8a8"/><rect x="105.48" y="9.00" width="0.8" height="1.6" fill="#b8b8b8"/><rect x="107.52" y="6.10" width="0.8" height="4.5" fill="#a8a8a8"/><rect x="109.57" y="9.00" width="0.8" height="1.6" fill="#b8b8b8"/><rect x="111.61" y="7.40" width="0.8" height="3.2" fill="#a8a8a8"/><rect x="113.66" y="9.00" width="0.8" height="1.6" fill="#b8b8b8"/><rect x="115.70" y="7.40" width="0.8" height="3.2" fill="#a8a8a8"/><rect x="117.74" y="9.00" width="0.8" height="1.6" fill="#b8b8b8"/><rect x="119.79" y="7.40" width="0.8" height="3.2" fill="#a8a8a8"/><rect x="121.83" y="9.00" width="0.8" height="1.6" fill="#b8b8b8"/><rect x="123.88" y="6.10" width="0.8" height="4.5" fill="#a8a8a8"/><rect x="125.92" y="9.00" width="0.8" height="1.6" fill="#b8b8b8"/><rect x="127.96" y="7.40" width="0.8" height="3.2" fill="#a8a8a8"/><rect x="130.01" y="9.00" width="0.8" height="1.6" fill="#b8b8b8"/><rect x="132.05" y="4.60" width="0.8" height="6" fill="#a8a8a8"/><rect x="134.09" y="9.00" width="0.8" height="1.6" fill="#b8b8b8"/><rect x="136.14" y="7.40" width="0.8" height="3.2" fill="#a8a8a8"/><rect x="138.18" y="9.00" width="0.8" height="1.6" fill="#b8b8b8"/><rect x="140.22" y="6.10" width="0.8" height="4.5" fill="#a8a8a8"/><rect x="142.27" y="9.00" width="0.8" height="1.6" fill="#b8b8b8"/><rect x="144.31" y="7.40" width="0.8" height="3.2" fill="#a8a8a8"/><rect x="146.36" y="9.00" width="0.8" height="1.6" fill="#b8b8b8"/><rect x="148.40" y="7.40" width="0.8" height="3.2" fill="#a8a8a8"/><rect x="150.44" y="9.00" width="0.8" height="1.6" fill="#b8b8b8"/><rect x="152.49" y="7.40" width="0.8" height="3.2" fill="#a8a8a8"/><rect x="154.53" y="9.00" width="0.8" height="1.6" fill="#b8b8b8"/><rect x="156.57" y="6.10" width="0.8" height="4.5" fill="#a8a8a8"/><rect x="158.62" y="9.00" width="0.8" height="1.6" fill="#b8b8b8"/><rect x="160.66" y="7.40" width="0.8" height="3.2" fill="#a8a8a8"/><rect x="162.71" y="9.00" width="0.8" height="1.6" fill="#b8b8b8"/><rect x="164.75" y="4.60" width="0.8" height="6" fill="#a8a8a8"/><rect x="166.79" y="9.00" width="0.8" height="1.6" fill="#b8b8b8"/><rect x="168.84" y="7.40" width="0.8" height="3.2" fill="#a8a8a8"/><rect x="170.88" y="9.00" width="0.8" height="1.6" fill="#b8b8b8"/><rect x="172.92" y="6.10" width="0.8" height="4.5" fill="#a8a8a8"/><rect x="174.97" y="9.00" width="0.8" height="1.6" fill="#b8b8b8"/><rect x="177.01" y="7.40" width="0.8" height="3.2" fill="#a8a8a8"/><rect x="179.06" y="9.00" width="0.8" height="1.6" fill="#b8b8b8"/><rect x="181.10" y="7.40" width="0.8" height="3.2" fill="#a8a8a8"/><rect x="183.14" y="9.00" width="0.8" height="1.6" fill="#b8b8b8"/><rect x="185.19" y="7.40" width="0.8" height="3.2" fill="#a8a8a8"/><rect x="187.23" y="9.00" width="0.8" height="1.6" fill="#b8b8b8"/><rect x="189.27" y="6.10" width="0.8" height="4.5" fill="#a8a8a8"/><rect x="191.32" y="9.00" width="0.8" height="1.6" fill="#b8b8b8"/><rect x="193.36" y="7.40" width="0.8" height="3.2" fill="#a8a8a8"/><rect x="195.41" y="9.00" width="0.8" height="1.6" fill="#b8b8b8"/><rect x="197.45" y="4.60" width="0.8" height="6" fill="#a8a8a8"/><rect x="199.49" y="9.00" width="0.8" height="1.6" fill="#b8b8b8"/><rect x="201.54" y="7.40" width="0.8" height="3.2" fill="#a8a8a8"/><rect x="203.58" y="9.00" width="0.8" height="1.6" fill="#b8b8b8"/><rect x="205.62" y="6.10" width="0.8" height="4.5" fill="#a8a8a8"/><rect x="207.67" y="9.00" width="0.8" height="1.6" fill="#b8b8b8"/><rect x="209.71" y="7.40" width="0.8" height="3.2" fill="#a8a8a8"/><rect x="211.76" y="9.00" width="0.8" height="1.6" fill="#b8b8b8"/><rect x="213.80" y="7.40" width="0.8" height="3.2" fill="#a8a8a8"/><rect x="215.84" y="9.00" width="0.8" height="1.6" fill="#b8b8b8"/><rect x="217.89" y="7.40" width="0.8" height="3.2" fill="#a8a8a8"/><rect x="219.93" y="9.00" width="0.8" height="1.6" fill="#b8b8b8"/><rect x="221.97" y="6.10" width="0.8" height="4.5" fill="#a8a8a8"/><rect x="224.02" y="9.00" width="0.8" height="1.6" fill="#b8b8b8"/><rect x="226.06" y="7.40" width="0.8" height="3.2" fill="#a8a8a8"/><rect x="228.11" y="9.00" width="0.8" height="1.6" fill="#b8b8b8"/><rect x="230.15" y="4.60" width="0.8" height="6" fill="#a8a8a8"/><rect x="232.19" y="9.00" width="0.8" height="1.6" fill="#b8b8b8"/><rect x="234.24" y="7.40" width="0.8" height="3.2" fill="#a8a8a8"/><rect x="236.28" y="9.00" width="0.8" height="1.6" fill="#b8b8b8"/><rect x="238.32" y="6.10" width="0.8" height="4.5" fill="#a8a8a8"/><rect x="240.37" y="9.00" width="0.8" height="1.6" fill="#b8b8b8"/><rect x="242.41" y="7.40" width="0.8" height="3.2" fill="#a8a8a8"/><rect x="244.46" y="9.00" width="0.8" height="1.6" fill="#b8b8b8"/><rect x="246.50" y="7.40" width="0.8" height="3.2" fill="#a8a8a8"/><rect x="248.54" y="9.00" width="0.8" height="1.6" fill="#b8b8b8"/><rect x="250.59" y="7.40" width="0.8" height="3.2" fill="#a8a8a8"/><rect x="252.63" y="9.00" width="0.8" height="1.6" fill="#b8b8b8"/><rect x="254.68" y="6.10" width="0.8" height="4.5" fill="#a8a8a8"/><rect x="256.72" y="9.00" width="0.8" height="1.6" fill="#b8b8b8"/><rect x="258.76" y="7.40" width="0.8" height="3.2" fill="#a8a8a8"/><rect x="260.81" y="9.00" width="0.8" height="1.6" fill="#b8b8b8"/><rect x="262.85" y="4.60" width="0.8" height="6" fill="#a8a8a8"/><rect x="264.89" y="9.00" width="0.8" height="1.6" fill="#b8b8b8"/><rect x="266.94" y="7.40" width="0.8" height="3.2" fill="#a8a8a8"/><rect x="268.98" y="9.00" width="0.8" height="1.6" fill="#b8b8b8"/><rect x="271.02" y="6.10" width="0.8" height="4.5" fill="#a8a8a8"/><rect x="273.07" y="9.00" width="0.8" height="1.6" fill="#b8b8b8"/><rect x="275.11" y="7.40" width="0.8" height="3.2" fill="#a8a8a8"/><rect x="277.16" y="9.00" width="0.8" height="1.6" fill="#b8b8b8"/><rect x="279.20" y="7.40" width="0.8" height="3.2" fill="#a8a8a8"/><rect x="281.24" y="9.00" width="0.8" height="1.6" fill="#b8b8b8"/><rect x="283.29" y="7.40" width="0.8" height="3.2" fill="#a8a8a8"/><rect x="285.33" y="9.00" width="0.8" height="1.6" fill="#b8b8b8"/><rect x="287.38" y="6.10" width="0.8" height="4.5" fill="#a8a8a8"/><rect x="289.42" y="9.00" width="0.8" height="1.6" fill="#b8b8b8"/><rect x="291.46" y="7.40" width="0.8" height="3.2" fill="#a8a8a8"/><rect x="293.51" y="9.00" width="0.8" height="1.6" fill="#b8b8b8"/><rect x="295.55" y="4.60" width="0.8" height="6" fill="#a8a8a8"/><rect x="297.59" y="9.00" width="0.8" height="1.6" fill="#b8b8b8"/><rect x="299.64" y="7.40" width="0.8" height="3.2" fill="#a8a8a8"/><rect x="301.68" y="9.00" width="0.8" height="1.6" fill="#b8b8b8"/><rect x="303.72" y="6.10" width="0.8" height="4.5" fill="#a8a8a8"/><rect x="305.77" y="9.00" width="0.8" height="1.6" fill="#b8b8b8"/><rect x="307.81" y="7.40" width="0.8" height="3.2" fill="#a8a8a8"/><rect x="309.86" y="9.00" width="0.8" height="1.6" fill="#b8b8b8"/><rect x="311.90" y="7.40" width="0.8" height="3.2" fill="#a8a8a8"/><rect x="313.94" y="9.00" width="0.8" height="1.6" fill="#b8b8b8"/><rect x="315.99" y="7.40" width="0.8" height="3.2" fill="#a8a8a8"/><rect x="318.03" y="9.00" width="0.8" height="1.6" fill="#b8b8b8"/><rect x="320.07" y="6.10" width="0.8" height="4.5" fill="#a8a8a8"/><rect x="322.12" y="9.00" width="0.8" height="1.6" fill="#b8b8b8"/><rect x="324.16" y="7.40" width="0.8" height="3.2" fill="#a8a8a8"/><rect x="326.21" y="9.00" width="0.8" height="1.6" fill="#b8b8b8"/><rect x="328.25" y="4.60" width="0.8" height="6" fill="#a8a8a8"/><rect x="330.29" y="9.00" width="0.8" height="1.6" fill="#b8b8b8"/><rect x="332.34" y="7.40" width="0.8" height="3.2" fill="#a8a8a8"/><rect x="334.38" y="9.00" width="0.8" height="1.6" fill="#b8b8b8"/><rect x="336.42" y="6.10" width="0.8" height="4.5" fill="#a8a8a8"/><rect x="338.47" y="9.00" width="0.8" height="1.6" fill="#b8b8b8"/><rect x="340.51" y="7.40" width="0.8" height="3.2" fill="#a8a8a8"/><rect x="342.56" y="9.00" width="0.8" height="1.6" fill="#b8b8b8"/><rect x="344.60" y="7.40" width="0.8" height="3.2" fill="#a8a8a8"/><rect x="346.64" y="9.00" width="0.8" height="1.6" fill="#b8b8b8"/><rect x="348.69" y="7.40" width="0.8" height="3.2" fill="#a8a8a8"/><rect x="350.73" y="9.00" width="0.8" height="1.6" fill="#b8b8b8"/><rect x="352.77" y="6.10" width="0.8" height="4.5" fill="#a8a8a8"/><rect x="354.82" y="9.00" width="0.8" height="1.6" fill="#b8b8b8"/><rect x="356.86" y="7.40" width="0.8" height="3.2" fill="#a8a8a8"/><rect x="358.91" y="9.00" width="0.8" height="1.6" fill="#b8b8b8"/><rect x="360.95" y="4.60" width="0.8" height="6" fill="#a8a8a8"/><rect x="362.99" y="9.00" width="0.8" height="1.6" fill="#b8b8b8"/><rect x="365.04" y="7.40" width="0.8" height="3.2" fill="#a8a8a8"/><rect x="367.08" y="9.00" width="0.8" height="1.6" fill="#b8b8b8"/><rect x="369.12" y="6.10" width="0.8" height="4.5" fill="#a8a8a8"/><rect x="371.17" y="9.00" width="0.8" height="1.6" fill="#b8b8b8"/><rect x="373.21" y="7.40" width="0.8" height="3.2" fill="#a8a8a8"/><rect x="375.26" y="9.00" width="0.8" height="1.6" fill="#b8b8b8"/><rect x="377.30" y="7.40" width="0.8" height="3.2" fill="#a8a8a8"/><rect x="379.34" y="9.00" width="0.8" height="1.6" fill="#b8b8b8"/><rect x="381.39" y="7.40" width="0.8" height="3.2" fill="#a8a8a8"/><rect x="383.43" y="9.00" width="0.8" height="1.6" fill="#b8b8b8"/><rect x="385.47" y="6.10" width="0.8" height="4.5" fill="#a8a8a8"/><rect x="387.52" y="9.00" width="0.8" height="1.6" fill="#b8b8b8"/><rect x="389.56" y="7.40" width="0.8" height="3.2" fill="#a8a8a8"/><rect x="391.61" y="9.00" width="0.8" height="1.6" fill="#b8b8b8"/><rect x="393.65" y="4.60" width="0.8" height="6" fill="#a8a8a8"/><rect x="395.69" y="9.00" width="0.8" height="1.6" fill="#b8b8b8"/><rect x="397.74" y="7.40" width="0.8" height="3.2" fill="#a8a8a8"/><rect x="399.78" y="9.00" width="0.8" height="1.6" fill="#b8b8b8"/><rect x="401.82" y="6.10" width="0.8" height="4.5" fill="#a8a8a8"/><rect x="403.87" y="9.00" width="0.8" height="1.6" fill="#b8b8b8"/><rect x="405.91" y="7.40" width="0.8" height="3.2" fill="#a8a8a8"/><rect x="407.96" y="9.00" width="0.8" height="1.6" fill="#b8b8b8"/><rect x="410.00" y="7.40" width="0.8" height="3.2" fill="#a8a8a8"/><rect x="412.04" y="9.00" width="0.8" height="1.6" fill="#b8b8b8"/><rect x="414.09" y="7.40" width="0.8" height="3.2" fill="#a8a8a8"/><rect x="416.13" y="9.00" width="0.8" height="1.6" fill="#b8b8b8"/><rect x="418.17" y="6.10" width="0.8" height="4.5" fill="#a8a8a8"/><rect x="420.22" y="9.00" width="0.8" height="1.6" fill="#b8b8b8"/><rect x="422.26" y="7.40" width="0.8" height="3.2" fill="#a8a8a8"/><rect x="424.31" y="9.00" width="0.8" height="1.6" fill="#b8b8b8"/><rect x="426.35" y="4.60" width="0.8" height="6" fill="#a8a8a8"/><rect x="428.39" y="9.00" width="0.8" height="1.6" fill="#b8b8b8"/><rect x="430.44" y="7.40" width="0.8" height="3.2" fill="#a8a8a8"/><rect x="432.48" y="9.00" width="0.8" height="1.6" fill="#b8b8b8"/><rect x="434.52" y="6.10" width="0.8" height="4.5" fill="#a8a8a8"/><rect x="436.57" y="9.00" width="0.8" height="1.6" fill="#b8b8b8"/><rect x="438.61" y="7.40" width="0.8" height="3.2" fill="#a8a8a8"/><rect x="440.66" y="9.00" width="0.8" height="1.6" fill="#b8b8b8"/><rect x="442.70" y="7.40" width="0.8" height="3.2" fill="#a8a8a8"/><rect x="444.74" y="9.00" width="0.8" height="1.6" fill="#b8b8b8"/><rect x="446.79" y="7.40" width="0.8" height="3.2" fill="#a8a8a8"/><rect x="448.83" y="9.00" width="0.8" height="1.6" fill="#b8b8b8"/><rect x="450.88" y="6.10" width="0.8" height="4.5" fill="#a8a8a8"/><rect x="452.92" y="9.00" width="0.8" height="1.6" fill="#b8b8b8"/><rect x="454.96" y="7.40" width="0.8" height="3.2" fill="#a8a8a8"/><rect x="457.01" y="9.00" width="0.8" height="1.6" fill="#b8b8b8"/><rect x="459.05" y="4.60" width="0.8" height="6" fill="#a8a8a8"/><rect x="461.09" y="9.00" width="0.8" height="1.6" fill="#b8b8b8"/><rect x="463.14" y="7.40" width="0.8" height="3.2" fill="#a8a8a8"/><rect x="465.18" y="9.00" width="0.8" height="1.6" fill="#b8b8b8"/><rect x="467.23" y="6.10" width="0.8" height="4.5" fill="#a8a8a8"/><rect x="469.27" y="9.00" width="0.8" height="1.6" fill="#b8b8b8"/><rect x="471.31" y="7.40" width="0.8" height="3.2" fill="#a8a8a8"/><rect x="473.36" y="9.00" width="0.8" height="1.6" fill="#b8b8b8"/><rect x="475.40" y="7.40" width="0.8" height="3.2" fill="#a8a8a8"/><rect x="477.44" y="9.00" width="0.8" height="1.6" fill="#b8b8b8"/><rect x="479.49" y="7.40" width="0.8" height="3.2" fill="#a8a8a8"/><rect x="481.53" y="9.00" width="0.8" height="1.6" fill="#b8b8b8"/><rect x="483.57" y="6.10" width="0.8" height="4.5" fill="#a8a8a8"/><rect x="485.62" y="9.00" width="0.8" height="1.6" fill="#b8b8b8"/><rect x="487.66" y="7.40" width="0.8" height="3.2" fill="#a8a8a8"/><rect x="489.71" y="9.00" width="0.8" height="1.6" fill="#b8b8b8"/><rect x="491.75" y="4.60" width="0.8" height="6" fill="#a8a8a8"/><rect x="493.79" y="9.00" width="0.8" height="1.6" fill="#b8b8b8"/><rect x="495.84" y="7.40" width="0.8" height="3.2" fill="#a8a8a8"/><rect x="497.88" y="9.00" width="0.8" height="1.6" fill="#b8b8b8"/><rect x="499.92" y="6.10" width="0.8" height="4.5" fill="#a8a8a8"/><rect x="501.97" y="9.00" width="0.8" height="1.6" fill="#b8b8b8"/><rect x="504.01" y="7.40" width="0.8" height="3.2" fill="#a8a8a8"/><rect x="506.06" y="9.00" width="0.8" height="1.6" fill="#b8b8b8"/><rect x="508.10" y="7.40" width="0.8" height="3.2" fill="#a8a8a8"/><rect x="510.14" y="9.00" width="0.8" height="1.6" fill="#b8b8b8"/><rect x="512.19" y="7.40" width="0.8" height="3.2" fill="#a8a8a8"/><rect x="514.23" y="9.00" width="0.8" height="1.6" fill="#b8b8b8"/><rect x="516.27" y="6.10" width="0.8" height="4.5" fill="#a8a8a8"/><rect x="518.32" y="9.00" width="0.8" height="1.6" fill="#b8b8b8"/><rect x="520.36" y="7.40" width="0.8" height="3.2" fill="#a8a8a8"/><rect x="522.41" y="9.00" width="0.8" height="1.6" fill="#b8b8b8"/><rect x="524.45" y="4.60" width="0.8" height="6" fill="#a8a8a8"/><rect x="526.49" y="9.00" width="0.8" height="1.6" fill="#b8b8b8"/><rect x="528.54" y="7.40" width="0.8" height="3.2" fill="#a8a8a8"/><rect x="530.58" y="9.00" width="0.8" height="1.6" fill="#b8b8b8"/><rect x="532.62" y="6.10" width="0.8" height="4.5" fill="#a8a8a8"/><rect x="534.67" y="9.00" width="0.8" height="1.6" fill="#b8b8b8"/><rect x="536.71" y="7.40" width="0.8" height="3.2" fill="#a8a8a8"/><rect x="538.76" y="9.00" width="0.8" height="1.6" fill="#b8b8b8"/><rect x="540.80" y="7.40" width="0.8" height="3.2" fill="#a8a8a8"/><rect x="542.84" y="9.00" width="0.8" height="1.6" fill="#b8b8b8"/><rect x="544.89" y="7.40" width="0.8" height="3.2" fill="#a8a8a8"/><rect x="546.93" y="9.00" width="0.8" height="1.6" fill="#b8b8b8"/><rect x="548.97" y="6.10" width="0.8" height="4.5" fill="#a8a8a8"/><rect x="551.02" y="9.00" width="0.8" height="1.6" fill="#b8b8b8"/><rect x="553.06" y="7.40" width="0.8" height="3.2" fill="#a8a8a8"/><rect x="555.11" y="9.00" width="0.8" height="1.6" fill="#b8b8b8"/><rect x="557.15" y="4.60" width="0.8" height="6" fill="#a8a8a8"/><rect x="559.19" y="9.00" width="0.8" height="1.6" fill="#b8b8b8"/><rect x="561.24" y="7.40" width="0.8" height="3.2" fill="#a8a8a8"/><rect x="563.28" y="9.00" width="0.8" height="1.6" fill="#b8b8b8"/><rect x="565.32" y="6.10" width="0.8" height="4.5" fill="#a8a8a8"/><rect x="567.37" y="9.00" width="0.8" height="1.6" fill="#b8b8b8"/><rect x="569.41" y="7.40" width="0.8" height="3.2" fill="#a8a8a8"/><rect x="571.46" y="9.00" width="0.8" height="1.6" fill="#b8b8b8"/><rect x="573.50" y="7.40" width="0.8" height="3.2" fill="#a8a8a8"/><rect x="575.54" y="9.00" width="0.8" height="1.6" fill="#b8b8b8"/><rect x="577.59" y="7.40" width="0.8" height="3.2" fill="#a8a8a8"/><rect x="579.63" y="9.00" width="0.8" height="1.6" fill="#b8b8b8"/><rect x="581.67" y="6.10" width="0.8" height="4.5" fill="#a8a8a8"/><rect x="583.72" y="9.00" width="0.8" height="1.6" fill="#b8b8b8"/><rect x="585.76" y="7.40" width="0.8" height="3.2" fill="#a8a8a8"/><rect x="587.81" y="9.00" width="0.8" height="1.6" fill="#b8b8b8"/><rect x="589.85" y="4.60" width="0.8" height="6" fill="#a8a8a8"/><rect x="591.89" y="9.00" width="0.8" height="1.6" fill="#b8b8b8"/><rect x="593.94" y="7.40" width="0.8" height="3.2" fill="#a8a8a8"/><rect x="595.98" y="9.00" width="0.8" height="1.6" fill="#b8b8b8"/><rect x="598.02" y="6.10" width="0.8" height="4.5" fill="#a8a8a8"/><rect x="600.07" y="9.00" width="0.8" height="1.6" fill="#b8b8b8"/><rect x="602.11" y="7.40" width="0.8" height="3.2" fill="#a8a8a8"/><rect x="604.16" y="9.00" width="0.8" height="1.6" fill="#b8b8b8"/><rect x="606.20" y="7.40" width="0.8" height="3.2" fill="#a8a8a8"/><rect x="608.24" y="9.00" width="0.8" height="1.6" fill="#b8b8b8"/><rect x="610.29" y="7.40" width="0.8" height="3.2" fill="#a8a8a8"/><rect x="612.33" y="9.00" width="0.8" height="1.6" fill="#b8b8b8"/><rect x="614.38" y="6.10" width="0.8" height="4.5" fill="#a8a8a8"/><rect x="616.42" y="9.00" width="0.8" height="1.6" fill="#b8b8b8"/><rect x="618.46" y="7.40" width="0.8" height="3.2" fill="#a8a8a8"/><rect x="620.51" y="9.00" width="0.8" height="1.6" fill="#b8b8b8"/><rect x="622.55" y="4.60" width="0.8" height="6" fill="#a8a8a8"/><rect x="624.59" y="9.00" width="0.8" height="1.6" fill="#b8b8b8"/><rect x="626.64" y="7.40" width="0.8" height="3.2" fill="#a8a8a8"/><rect x="628.68" y="9.00" width="0.8" height="1.6" fill="#b8b8b8"/><rect x="630.73" y="6.10" width="0.8" height="4.5" fill="#a8a8a8"/><rect x="632.77" y="9.00" width="0.8" height="1.6" fill="#b8b8b8"/><rect x="634.81" y="7.40" width="0.8" height="3.2" fill="#a8a8a8"/><rect x="636.86" y="9.00" width="0.8" height="1.6" fill="#b8b8b8"/><rect x="638.90" y="7.40" width="0.8" height="3.2" fill="#a8a8a8"/><rect x="640.94" y="9.00" width="0.8" height="1.6" fill="#b8b8b8"/><rect x="642.99" y="7.40" width="0.8" height="3.2" fill="#a8a8a8"/><rect x="645.03" y="9.00" width="0.8" height="1.6" fill="#b8b8b8"/><rect x="647.08" y="6.10" width="0.8" height="4.5" fill="#a8a8a8"/><rect x="649.12" y="9.00" width="0.8" height="1.6" fill="#b8b8b8"/><rect x="651.16" y="7.40" width="0.8" height="3.2" fill="#a8a8a8"/><rect x="653.21" y="9.00" width="0.8" height="1.6" fill="#b8b8b8"/><rect x="655.25" y="4.60" width="0.8" height="6" fill="#a8a8a8"/><rect x="657.29" y="9.00" width="0.8" height="1.6" fill="#b8b8b8"/><rect x="659.34" y="7.40" width="0.8" height="3.2" fill="#a8a8a8"/><rect x="661.38" y="9.00" width="0.8" height="1.6" fill="#b8b8b8"/><rect x="663.43" y="6.10" width="0.8" height="4.5" fill="#a8a8a8"/><rect x="665.47" y="9.00" width="0.8" height="1.6" fill="#b8b8b8"/><rect x="667.51" y="7.40" width="0.8" height="3.2" fill="#a8a8a8"/><rect x="669.56" y="9.00" width="0.8" height="1.6" fill="#b8b8b8"/><rect x="671.60" y="7.40" width="0.8" height="3.2" fill="#a8a8a8"/><rect x="673.64" y="9.00" width="0.8" height="1.6" fill="#b8b8b8"/><rect x="675.69" y="7.40" width="0.8" height="3.2" fill="#a8a8a8"/><rect x="677.73" y="9.00" width="0.8" height="1.6" fill="#b8b8b8"/><rect x="679.77" y="6.10" width="0.8" height="4.5" fill="#a8a8a8"/><rect x="681.82" y="9.00" width="0.8" height="1.6" fill="#b8b8b8"/><rect x="683.86" y="7.40" width="0.8" height="3.2" fill="#a8a8a8"/><rect x="685.91" y="9.00" width="0.8" height="1.6" fill="#b8b8b8"/><rect x="687.95" y="4.60" width="0.8" height="6" fill="#a8a8a8"/><rect x="689.99" y="9.00" width="0.8" height="1.6" fill="#b8b8b8"/><rect x="692.04" y="7.40" width="0.8" height="3.2" fill="#a8a8a8"/><rect x="694.08" y="9.00" width="0.8" height="1.6" fill="#b8b8b8"/><rect x="696.12" y="6.10" width="0.8" height="4.5" fill="#a8a8a8"/><rect x="698.17" y="9.00" width="0.8" height="1.6" fill="#b8b8b8"/><rect x="700.21" y="7.40" width="0.8" height="3.2" fill="#a8a8a8"/><rect x="702.26" y="9.00" width="0.8" height="1.6" fill="#b8b8b8"/><rect x="704.30" y="7.40" width="0.8" height="3.2" fill="#a8a8a8"/><rect x="706.34" y="9.00" width="0.8" height="1.6" fill="#b8b8b8"/><rect x="708.39" y="7.40" width="0.8" height="3.2" fill="#a8a8a8"/><rect x="710.43" y="9.00" width="0.8" height="1.6" fill="#b8b8b8"/><rect x="712.47" y="6.10" width="0.8" height="4.5" fill="#a8a8a8"/><rect x="714.52" y="9.00" width="0.8" height="1.6" fill="#b8b8b8"/><rect x="716.56" y="7.40" width="0.8" height="3.2" fill="#a8a8a8"/><rect x="718.61" y="9.00" width="0.8" height="1.6" fill="#b8b8b8"/><rect x="720.65" y="4.60" width="0.8" height="6" fill="#a8a8a8"/><rect x="722.69" y="9.00" width="0.8" height="1.6" fill="#b8b8b8"/><rect x="724.74" y="7.40" width="0.8" height="3.2" fill="#a8a8a8"/><rect x="726.78" y="9.00" width="0.8" height="1.6" fill="#b8b8b8"/><rect x="728.82" y="6.10" width="0.8" height="4.5" fill="#a8a8a8"/><rect x="730.87" y="9.00" width="0.8" height="1.6" fill="#b8b8b8"/><rect x="732.91" y="7.40" width="0.8" height="3.2" fill="#a8a8a8"/><rect x="734.96" y="9.00" width="0.8" height="1.6" fill="#b8b8b8"/><rect x="737.00" y="7.40" width="0.8" height="3.2" fill="#a8a8a8"/><rect x="739.04" y="9.00" width="0.8" height="1.6" fill="#b8b8b8"/><rect x="741.09" y="7.40" width="0.8" height="3.2" fill="#a8a8a8"/><rect x="743.13" y="9.00" width="0.8" height="1.6" fill="#b8b8b8"/><rect x="745.17" y="6.10" width="0.8" height="4.5" fill="#a8a8a8"/><rect x="747.22" y="9.00" width="0.8" height="1.6" fill="#b8b8b8"/><rect x="749.26" y="7.40" width="0.8" height="3.2" fill="#a8a8a8"/><rect x="751.31" y="9.00" width="0.8" height="1.6" fill="#b8b8b8"/><rect x="753.35" y="4.60" width="0.8" height="6" fill="#a8a8a8"/><rect x="755.39" y="9.00" width="0.8" height="1.6" fill="#b8b8b8"/><rect x="757.44" y="7.40" width="0.8" height="3.2" fill="#a8a8a8"/><rect x="759.48" y="9.00" width="0.8" height="1.6" fill="#b8b8b8"/><rect x="761.52" y="6.10" width="0.8" height="4.5" fill="#a8a8a8"/><rect x="763.57" y="9.00" width="0.8" height="1.6" fill="#b8b8b8"/><rect x="765.61" y="7.40" width="0.8" height="3.2" fill="#a8a8a8"/><rect x="767.66" y="9.00" width="0.8" height="1.6" fill="#b8b8b8"/><rect x="769.70" y="7.40" width="0.8" height="3.2" fill="#a8a8a8"/><rect x="771.74" y="9.00" width="0.8" height="1.6" fill="#b8b8b8"/><rect x="773.79" y="7.40" width="0.8" height="3.2" fill="#a8a8a8"/><rect x="775.83" y="9.00" width="0.8" height="1.6" fill="#b8b8b8"/><rect x="777.88" y="6.10" width="0.8" height="4.5" fill="#a8a8a8"/><rect x="779.92" y="9.00" width="0.8" height="1.6" fill="#b8b8b8"/><rect x="781.96" y="7.40" width="0.8" height="3.2" fill="#a8a8a8"/><rect x="784.01" y="9.00" width="0.8" height="1.6" fill="#b8b8b8"/><rect x="786.05" y="4.60" width="0.8" height="6" fill="#a8a8a8"/><rect x="788.09" y="9.00" width="0.8" height="1.6" fill="#b8b8b8"/><rect x="790.14" y="7.40" width="0.8" height="3.2" fill="#a8a8a8"/><rect x="792.18" y="9.00" width="0.8" height="1.6" fill="#b8b8b8"/><rect x="794.23" y="6.10" width="0.8" height="4.5" fill="#a8a8a8"/><rect x="796.27" y="9.00" width="0.8" height="1.6" fill="#b8b8b8"/><rect x="798.31" y="7.40" width="0.8" height="3.2" fill="#a8a8a8"/><rect x="800.36" y="9.00" width="0.8" height="1.6" fill="#b8b8b8"/><rect x="802.40" y="7.40" width="0.8" height="3.2" fill="#a8a8a8"/><rect x="804.44" y="9.00" width="0.8" height="1.6" fill="#b8b8b8"/><rect x="806.49" y="7.40" width="0.8" height="3.2" fill="#a8a8a8"/><rect x="808.53" y="9.00" width="0.8" height="1.6" fill="#b8b8b8"/><rect x="810.58" y="6.10" width="0.8" height="4.5" fill="#a8a8a8"/><rect x="812.62" y="9.00" width="0.8" height="1.6" fill="#b8b8b8"/><rect x="814.66" y="7.40" width="0.8" height="3.2" fill="#a8a8a8"/><rect x="816.71" y="9.00" width="0.8" height="1.6" fill="#b8b8b8"/><rect x="818.75" y="4.60" width="0.8" height="6" fill="#a8a8a8"/><rect x="820.79" y="9.00" width="0.8" height="1.6" fill="#b8b8b8"/><rect x="822.84" y="7.40" width="0.8" height="3.2" fill="#a8a8a8"/><rect x="824.88" y="9.00" width="0.8" height="1.6" fill="#b8b8b8"/><rect x="826.93" y="6.10" width="0.8" height="4.5" fill="#a8a8a8"/><rect x="828.97" y="9.00" width="0.8" height="1.6" fill="#b8b8b8"/><rect x="831.01" y="7.40" width="0.8" height="3.2" fill="#a8a8a8"/><rect x="833.06" y="9.00" width="0.8" height="1.6" fill="#b8b8b8"/><rect x="835.10" y="7.40" width="0.8" height="3.2" fill="#a8a8a8"/><rect x="837.14" y="9.00" width="0.8" height="1.6" fill="#b8b8b8"/></svg>
<div class="a" style="left:871px;top:137px;width:0.9px;height:10px;background:#8a8a8a;"></div>
<div class="a t" style="left:199.80px;top:101.15px;font-size:49.00px;line-height:49.00px;color:#4a4a4a;transform-origin:0 41.65px;transform:scale(0.1,0.1080);">8</div>
<div class="a t" style="left:232.50px;top:101.15px;font-size:49.00px;line-height:49.00px;color:#4a4a4a;transform-origin:0 41.65px;transform:scale(0.1,0.1080);">7</div>
<div class="a t" style="left:265.20px;top:101.15px;font-size:49.00px;line-height:49.00px;color:#4a4a4a;transform-origin:0 41.65px;transform:scale(0.1,0.1080);">6</div>
<div class="a t" style="left:297.90px;top:101.15px;font-size:49.00px;line-height:49.00px;color:#4a4a4a;transform-origin:0 41.65px;transform:scale(0.1,0.1080);">5</div>
<div class="a t" style="left:330.60px;top:101.15px;font-size:49.00px;line-height:49.00px;color:#4a4a4a;transform-origin:0 41.65px;transform:scale(0.1,0.1080);">4</div>
<div class="a t" style="left:363.30px;top:101.15px;font-size:49.00px;line-height:49.00px;color:#4a4a4a;transform-origin:0 41.65px;transform:scale(0.1,0.1080);">3</div>
<div class="a t" style="left:396.00px;top:101.15px;font-size:49.00px;line-height:49.00px;color:#4a4a4a;transform-origin:0 41.65px;transform:scale(0.1,0.1080);">2</div>
<div class="a t" style="left:428.70px;top:101.15px;font-size:49.00px;line-height:49.00px;color:#4a4a4a;transform-origin:0 41.65px;transform:scale(0.1,0.1080);">1</div>
<div class="a t" style="left:461.40px;top:101.15px;font-size:49.00px;line-height:49.00px;color:#4a4a4a;transform-origin:0 41.65px;transform:scale(0.1,0.1080);">0</div>
<div class="a t" style="left:494.10px;top:101.15px;font-size:49.00px;line-height:49.00px;color:#4a4a4a;transform-origin:0 41.65px;transform:scale(0.1,0.1080);">1</div>
<div class="a t" style="left:526.80px;top:101.15px;font-size:49.00px;line-height:49.00px;color:#4a4a4a;transform-origin:0 41.65px;transform:scale(0.1,0.1080);">2</div>
<div class="a t" style="left:559.50px;top:101.15px;font-size:49.00px;line-height:49.00px;color:#4a4a4a;transform-origin:0 41.65px;transform:scale(0.1,0.1080);">3</div>
<div class="a t" style="left:592.20px;top:101.15px;font-size:49.00px;line-height:49.00px;color:#4a4a4a;transform-origin:0 41.65px;transform:scale(0.1,0.1080);">4</div>
<div class="a t" style="left:624.90px;top:101.15px;font-size:49.00px;line-height:49.00px;color:#4a4a4a;transform-origin:0 41.65px;transform:scale(0.1,0.1080);">5</div>
<div class="a t" style="left:657.60px;top:101.15px;font-size:49.00px;line-height:49.00px;color:#4a4a4a;transform-origin:0 41.65px;transform:scale(0.1,0.1080);">6</div>
<div class="a t" style="left:690.30px;top:101.15px;font-size:49.00px;line-height:49.00px;color:#4a4a4a;transform-origin:0 41.65px;transform:scale(0.1,0.1080);">7</div>
<div class="a t" style="left:723.00px;top:101.15px;font-size:49.00px;line-height:49.00px;color:#4a4a4a;transform-origin:0 41.65px;transform:scale(0.1,0.1080);">8</div>
<div class="a t" style="left:755.70px;top:101.15px;font-size:49.00px;line-height:49.00px;color:#4a4a4a;transform-origin:0 41.65px;transform:scale(0.1,0.1080);">9</div>
<div class="a t" style="left:788.40px;top:101.15px;font-size:49.00px;line-height:49.00px;color:#4a4a4a;transform-origin:0 41.65px;transform:scale(0.1,0.1080);">10</div>
<div class="a t" style="left:821.10px;top:101.15px;font-size:49.00px;line-height:49.00px;color:#4a4a4a;transform-origin:0 41.65px;transform:scale(0.1,0.1080);">11</div>
<div class="a t" style="left:853.80px;top:101.15px;font-size:49.00px;line-height:49.00px;color:#4a4a4a;transform-origin:0 41.65px;transform:scale(0.1,0.1080);">12</div>
<div class="a t" style="left:886.50px;top:101.15px;font-size:49.00px;line-height:49.00px;color:#4a4a4a;transform-origin:0 41.65px;transform:scale(0.1,0.1080);">13</div>
<div class="a t" style="left:919.20px;top:101.15px;font-size:49.00px;line-height:49.00px;color:#4a4a4a;transform-origin:0 41.65px;transform:scale(0.1,0.1080);">14</div>
<div class="a t" style="left:951.90px;top:101.15px;font-size:49.00px;line-height:49.00px;color:#4a4a4a;transform-origin:0 41.65px;transform:scale(0.1,0.1080);">15</div>
<div class="a t" style="left:984.60px;top:101.15px;font-size:49.00px;line-height:49.00px;color:#4a4a4a;transform-origin:0 41.65px;transform:scale(0.1,0.1080);">16</div>
<div class="a t" style="left:1017.30px;top:101.15px;font-size:49.00px;line-height:49.00px;color:#4a4a4a;transform-origin:0 41.65px;transform:scale(0.1,0.1080);">17</div>
<svg class="a" style="left:168px;top:149px;" width="13" height="296" viewBox="0 0 13 296"><rect x="5.90" y="1.45" width="5.1" height="0.8" fill="#a8a8a8"/><rect x="9.64" y="3.49" width="1.36" height="0.8" fill="#b8b8b8"/><rect x="8.28" y="5.54" width="2.72" height="0.8" fill="#a8a8a8"/><rect x="9.64" y="7.58" width="1.36" height="0.8" fill="#b8b8b8"/><rect x="7.18" y="9.63" width="3.8249999999999997" height="0.8" fill="#a8a8a8"/><rect x="9.64" y="11.67" width="1.36" height="0.8" fill="#b8b8b8"/><rect x="8.28" y="13.71" width="2.72" height="0.8" fill="#a8a8a8"/><rect x="9.64" y="15.76" width="1.36" height="0.8" fill="#b8b8b8"/><rect x="8.28" y="17.80" width="2.72" height="0.8" fill="#a8a8a8"/><rect x="9.64" y="19.84" width="1.36" height="0.8" fill="#b8b8b8"/><rect x="8.28" y="21.89" width="2.72" height="0.8" fill="#a8a8a8"/><rect x="9.64" y="23.93" width="1.36" height="0.8" fill="#b8b8b8"/><rect x="7.18" y="25.98" width="3.8249999999999997" height="0.8" fill="#a8a8a8"/><rect x="9.64" y="28.02" width="1.36" height="0.8" fill="#b8b8b8"/><rect x="8.28" y="30.06" width="2.72" height="0.8" fill="#a8a8a8"/><rect x="9.64" y="32.11" width="1.36" height="0.8" fill="#b8b8b8"/><rect x="5.90" y="34.15" width="5.1" height="0.8" fill="#a8a8a8"/><rect x="9.64" y="36.19" width="1.36" height="0.8" fill="#b8b8b8"/><rect x="8.28" y="38.24" width="2.72" height="0.8" fill="#a8a8a8"/><rect x="9.64" y="40.28" width="1.36" height="0.8" fill="#b8b8b8"/><rect x="7.18" y="42.33" width="3.8249999999999997" height="0.8" fill="#a8a8a8"/><rect x="9.64" y="44.37" width="1.36" height="0.8" fill="#b8b8b8"/><rect x="8.28" y="46.41" width="2.72" height="0.8" fill="#a8a8a8"/><rect x="9.64" y="48.46" width="1.36" height="0.8" fill="#b8b8b8"/><rect x="8.28" y="50.50" width="2.72" height="0.8" fill="#a8a8a8"/><rect x="9.64" y="52.54" width="1.36" height="0.8" fill="#b8b8b8"/><rect x="8.28" y="54.59" width="2.72" height="0.8" fill="#a8a8a8"/><rect x="9.64" y="56.63" width="1.36" height="0.8" fill="#b8b8b8"/><rect x="7.18" y="58.68" width="3.8249999999999997" height="0.8" fill="#a8a8a8"/><rect x="9.64" y="60.72" width="1.36" height="0.8" fill="#b8b8b8"/><rect x="8.28" y="62.76" width="2.72" height="0.8" fill="#a8a8a8"/><rect x="9.64" y="64.81" width="1.36" height="0.8" fill="#b8b8b8"/><rect x="5.90" y="66.85" width="5.1" height="0.8" fill="#a8a8a8"/><rect x="9.64" y="68.89" width="1.36" height="0.8" fill="#b8b8b8"/><rect x="8.28" y="70.94" width="2.72" height="0.8" fill="#a8a8a8"/><rect x="9.64" y="72.98" width="1.36" height="0.8" fill="#b8b8b8"/><rect x="7.18" y="75.03" width="3.8249999999999997" height="0.8" fill="#a8a8a8"/><rect x="9.64" y="77.07" width="1.36" height="0.8" fill="#b8b8b8"/><rect x="8.28" y="79.11" width="2.72" height="0.8" fill="#a8a8a8"/><rect x="9.64" y="81.16" width="1.36" height="0.8" fill="#b8b8b8"/><rect x="8.28" y="83.20" width="2.72" height="0.8" fill="#a8a8a8"/><rect x="9.64" y="85.24" width="1.36" height="0.8" fill="#b8b8b8"/><rect x="8.28" y="87.29" width="2.72" height="0.8" fill="#a8a8a8"/><rect x="9.64" y="89.33" width="1.36" height="0.8" fill="#b8b8b8"/><rect x="7.18" y="91.38" width="3.8249999999999997" height="0.8" fill="#a8a8a8"/><rect x="9.64" y="93.42" width="1.36" height="0.8" fill="#b8b8b8"/><rect x="8.28" y="95.46" width="2.72" height="0.8" fill="#a8a8a8"/><rect x="9.64" y="97.51" width="1.36" height="0.8" fill="#b8b8b8"/><rect x="5.90" y="99.55" width="5.1" height="0.8" fill="#a8a8a8"/><rect x="9.64" y="101.59" width="1.36" height="0.8" fill="#b8b8b8"/><rect x="8.28" y="103.64" width="2.72" height="0.8" fill="#a8a8a8"/><rect x="9.64" y="105.68" width="1.36" height="0.8" fill="#b8b8b8"/><rect x="7.18" y="107.73" width="3.8249999999999997" height="0.8" fill="#a8a8a8"/><rect x="9.64" y="109.77" width="1.36" height="0.8" fill="#b8b8b8"/><rect x="8.28" y="111.81" width="2.72" height="0.8" fill="#a8a8a8"/><rect x="9.64" y="113.86" width="1.36" height="0.8" fill="#b8b8b8"/><rect x="8.28" y="115.90" width="2.72" height="0.8" fill="#a8a8a8"/><rect x="9.64" y="117.94" width="1.36" height="0.8" fill="#b8b8b8"/><rect x="8.28" y="119.99" width="2.72" height="0.8" fill="#a8a8a8"/><rect x="9.64" y="122.03" width="1.36" height="0.8" fill="#b8b8b8"/><rect x="7.18" y="124.08" width="3.8249999999999997" height="0.8" fill="#a8a8a8"/><rect x="9.64" y="126.12" width="1.36" height="0.8" fill="#b8b8b8"/><rect x="8.28" y="128.16" width="2.72" height="0.8" fill="#a8a8a8"/><rect x="9.64" y="130.21" width="1.36" height="0.8" fill="#b8b8b8"/><rect x="5.90" y="132.25" width="5.1" height="0.8" fill="#a8a8a8"/><rect x="9.64" y="134.29" width="1.36" height="0.8" fill="#b8b8b8"/><rect x="8.28" y="136.34" width="2.72" height="0.8" fill="#a8a8a8"/><rect x="9.64" y="138.38" width="1.36" height="0.8" fill="#b8b8b8"/><rect x="7.18" y="140.43" width="3.8249999999999997" height="0.8" fill="#a8a8a8"/><rect x="9.64" y="142.47" width="1.36" height="0.8" fill="#b8b8b8"/><rect x="8.28" y="144.51" width="2.72" height="0.8" fill="#a8a8a8"/><rect x="9.64" y="146.56" width="1.36" height="0.8" fill="#b8b8b8"/><rect x="8.28" y="148.60" width="2.72" height="0.8" fill="#a8a8a8"/><rect x="9.64" y="150.64" width="1.36" height="0.8" fill="#b8b8b8"/><rect x="8.28" y="152.69" width="2.72" height="0.8" fill="#a8a8a8"/><rect x="9.64" y="154.73" width="1.36" height="0.8" fill="#b8b8b8"/><rect x="7.18" y="156.78" width="3.8249999999999997" height="0.8" fill="#a8a8a8"/><rect x="9.64" y="158.82" width="1.36" height="0.8" fill="#b8b8b8"/><rect x="8.28" y="160.86" width="2.72" height="0.8" fill="#a8a8a8"/><rect x="9.64" y="162.91" width="1.36" height="0.8" fill="#b8b8b8"/><rect x="5.90" y="164.95" width="5.1" height="0.8" fill="#a8a8a8"/><rect x="9.64" y="166.99" width="1.36" height="0.8" fill="#b8b8b8"/><rect x="8.28" y="169.04" width="2.72" height="0.8" fill="#a8a8a8"/><rect x="9.64" y="171.08" width="1.36" height="0.8" fill="#b8b8b8"/><rect x="7.18" y="173.12" width="3.8249999999999997" height="0.8" fill="#a8a8a8"/><rect x="9.64" y="175.17" width="1.36" height="0.8" fill="#b8b8b8"/><rect x="8.28" y="177.21" width="2.72" height="0.8" fill="#a8a8a8"/><rect x="9.64" y="179.26" width="1.36" height="0.8" fill="#b8b8b8"/><rect x="8.28" y="181.30" width="2.72" height="0.8" fill="#a8a8a8"/><rect x="9.64" y="183.34" width="1.36" height="0.8" fill="#b8b8b8"/><rect x="8.28" y="185.39" width="2.72" height="0.8" fill="#a8a8a8"/><rect x="9.64" y="187.43" width="1.36" height="0.8" fill="#b8b8b8"/><rect x="7.18" y="189.48" width="3.8249999999999997" height="0.8" fill="#a8a8a8"/><rect x="9.64" y="191.52" width="1.36" height="0.8" fill="#b8b8b8"/><rect x="8.28" y="193.56" width="2.72" height="0.8" fill="#a8a8a8"/><rect x="9.64" y="195.61" width="1.36" height="0.8" fill="#b8b8b8"/><rect x="5.90" y="197.65" width="5.1" height="0.8" fill="#a8a8a8"/><rect x="9.64" y="199.69" width="1.36" height="0.8" fill="#b8b8b8"/><rect x="8.28" y="201.74" width="2.72" height="0.8" fill="#a8a8a8"/><rect x="9.64" y="203.78" width="1.36" height="0.8" fill="#b8b8b8"/><rect x="7.18" y="205.82" width="3.8249999999999997" height="0.8" fill="#a8a8a8"/><rect x="9.64" y="207.87" width="1.36" height="0.8" fill="#b8b8b8"/><rect x="8.28" y="209.91" width="2.72" height="0.8" fill="#a8a8a8"/><rect x="9.64" y="211.96" width="1.36" height="0.8" fill="#b8b8b8"/><rect x="8.28" y="214.00" width="2.72" height="0.8" fill="#a8a8a8"/><rect x="9.64" y="216.04" width="1.36" height="0.8" fill="#b8b8b8"/><rect x="8.28" y="218.09" width="2.72" height="0.8" fill="#a8a8a8"/><rect x="9.64" y="220.13" width="1.36" height="0.8" fill="#b8b8b8"/><rect x="7.18" y="222.18" width="3.8249999999999997" height="0.8" fill="#a8a8a8"/><rect x="9.64" y="224.22" width="1.36" height="0.8" fill="#b8b8b8"/><rect x="8.28" y="226.26" width="2.72" height="0.8" fill="#a8a8a8"/><rect x="9.64" y="228.31" width="1.36" height="0.8" fill="#b8b8b8"/><rect x="5.90" y="230.35" width="5.1" height="0.8" fill="#a8a8a8"/><rect x="9.64" y="232.39" width="1.36" height="0.8" fill="#b8b8b8"/><rect x="8.28" y="234.44" width="2.72" height="0.8" fill="#a8a8a8"/><rect x="9.64" y="236.48" width="1.36" height="0.8" fill="#b8b8b8"/><rect x="7.18" y="238.52" width="3.8249999999999997" height="0.8" fill="#a8a8a8"/><rect x="9.64" y="240.57" width="1.36" height="0.8" fill="#b8b8b8"/><rect x="8.28" y="242.61" width="2.72" height="0.8" fill="#a8a8a8"/><rect x="9.64" y="244.66" width="1.36" height="0.8" fill="#b8b8b8"/><rect x="8.28" y="246.70" width="2.72" height="0.8" fill="#a8a8a8"/><rect x="9.64" y="248.74" width="1.36" height="0.8" fill="#b8b8b8"/><rect x="8.28" y="250.79" width="2.72" height="0.8" fill="#a8a8a8"/><rect x="9.64" y="252.83" width="1.36" height="0.8" fill="#b8b8b8"/><rect x="7.18" y="254.88" width="3.8249999999999997" height="0.8" fill="#a8a8a8"/><rect x="9.64" y="256.92" width="1.36" height="0.8" fill="#b8b8b8"/><rect x="8.28" y="258.96" width="2.72" height="0.8" fill="#a8a8a8"/><rect x="9.64" y="261.01" width="1.36" height="0.8" fill="#b8b8b8"/><rect x="5.90" y="263.05" width="5.1" height="0.8" fill="#a8a8a8"/><rect x="9.64" y="265.09" width="1.36" height="0.8" fill="#b8b8b8"/><rect x="8.28" y="267.14" width="2.72" height="0.8" fill="#a8a8a8"/><rect x="9.64" y="269.18" width="1.36" height="0.8" fill="#b8b8b8"/><rect x="7.18" y="271.23" width="3.8249999999999997" height="0.8" fill="#a8a8a8"/><rect x="9.64" y="273.27" width="1.36" height="0.8" fill="#b8b8b8"/><rect x="8.28" y="275.31" width="2.72" height="0.8" fill="#a8a8a8"/><rect x="9.64" y="277.36" width="1.36" height="0.8" fill="#b8b8b8"/><rect x="8.28" y="279.40" width="2.72" height="0.8" fill="#a8a8a8"/><rect x="9.64" y="281.44" width="1.36" height="0.8" fill="#b8b8b8"/><rect x="8.28" y="283.49" width="2.72" height="0.8" fill="#a8a8a8"/><rect x="9.64" y="285.53" width="1.36" height="0.8" fill="#b8b8b8"/><rect x="7.18" y="287.58" width="3.8249999999999997" height="0.8" fill="#a8a8a8"/><rect x="9.64" y="289.62" width="1.36" height="0.8" fill="#b8b8b8"/><rect x="8.28" y="291.66" width="2.72" height="0.8" fill="#a8a8a8"/><rect x="9.64" y="293.71" width="1.36" height="0.8" fill="#b8b8b8"/><rect x="5.90" y="295.75" width="5.1" height="0.8" fill="#a8a8a8"/></svg>
<div class="a" style="left:168.5px;top:308px;width:11px;height:0.9px;background:#8a8a8a;"></div>
<div class="a t" style="left:168.80px;top:130.45px;font-size:49.00px;line-height:49.00px;color:#4a4a4a;transform-origin:0 41.65px;transform:scale(0.1,0.1080);">0</div>
<div class="a t" style="left:168.80px;top:163.15px;font-size:49.00px;line-height:49.00px;color:#4a4a4a;transform-origin:0 41.65px;transform:scale(0.1,0.1080);">1</div>
<div class="a t" style="left:168.80px;top:195.85px;font-size:49.00px;line-height:49.00px;color:#4a4a4a;transform-origin:0 41.65px;transform:scale(0.1,0.1080);">2</div>
<div class="a t" style="left:168.80px;top:228.55px;font-size:49.00px;line-height:49.00px;color:#4a4a4a;transform-origin:0 41.65px;transform:scale(0.1,0.1080);">3</div>
<div class="a t" style="left:168.80px;top:261.25px;font-size:49.00px;line-height:49.00px;color:#4a4a4a;transform-origin:0 41.65px;transform:scale(0.1,0.1080);">4</div>
<div class="a t" style="left:168.80px;top:293.95px;font-size:49.00px;line-height:49.00px;color:#4a4a4a;transform-origin:0 41.65px;transform:scale(0.1,0.1080);">5</div>
<div class="a t" style="left:168.80px;top:326.65px;font-size:49.00px;line-height:49.00px;color:#4a4a4a;transform-origin:0 41.65px;transform:scale(0.1,0.1080);">6</div>
<div class="a t" style="left:168.80px;top:359.35px;font-size:49.00px;line-height:49.00px;color:#4a4a4a;transform-origin:0 41.65px;transform:scale(0.1,0.1080);">7</div>
<div class="a t" style="left:168.80px;top:392.05px;font-size:49.00px;line-height:49.00px;color:#4a4a4a;transform-origin:0 41.65px;transform:scale(0.1,0.1080);">8</div>
<div class="a" style="left:1020px;top:136px;width:9px;height:309px;background:#e8e8e8;"></div>
<div class="a" style="left:1020.5px;top:137px;width:8px;height:8px;background:#fff;"></div>
<svg class="a" style="left:1021px;top:138px;" width="7" height="6" viewBox="0 0 7 6"><path d="M1 4.5L3.5 1.5L6 4.5Z" fill="#444"/></svg>
<div class="a" style="left:1020px;top:230.5px;width:8.5px;height:194px;background:#fff;box-shadow:0 0 0 0.5px #e4e4e4"></div>
<div class="a" style="left:461px;top:166px;width:280px;height:300px;background:#fff;border:1px solid #e9e9e9"></div>
<div class="a" style="left:478px;top:175px;width:1px;height:259px;background:repeating-linear-gradient(#f0f0f0 0 1px,#f8f8f8 1px 2px);"></div>
<div class="a" style="left:527px;top:175px;width:1px;height:259px;background:repeating-linear-gradient(#f0f0f0 0 1px,#f8f8f8 1px 2px);"></div>
<div class="a" style="left:576px;top:175px;width:1px;height:259px;background:repeating-linear-gradient(#f0f0f0 0 1px,#f8f8f8 1px 2px);"></div>
<div class="a" style="left:625px;top:175px;width:1px;height:259px;background:repeating-linear-gradient(#f0f0f0 0 1px,#f8f8f8 1px 2px);"></div>
<div class="a" style="left:674px;top:175px;width:1px;height:259px;background:repeating-linear-gradient(#f0f0f0 0 1px,#f8f8f8 1px 2px);"></div>
<div class="a" style="left:723px;top:175px;width:1px;height:259px;background:repeating-linear-gradient(#f0f0f0 0 1px,#f8f8f8 1px 2px);"></div>
<div class="a" style="left:462px;top:182.5px;width:278px;height:1px;background:repeating-linear-gradient(90deg,#f0f0f0 0 1px,#f8f8f8 1px 2px);"></div>
<div class="a" style="left:462px;top:427px;width:278px;height:1px;background:repeating-linear-gradient(90deg,#f0f0f0 0 1px,#f8f8f8 1px 2px);"></div>
<div class="a" style="left:481.2px;top:186.5px;width:41.6px;height:237.5px;background:#5fc0c1;box-shadow:inset 1px 0 0 #4db5b6,inset -1px 0 0 #4db5b6,inset 0 -1px 0 #4db5b6">
<div class="a" style="left:0;top:38.5px;width:100%;height:21px;background:#bfe6e6"></div>
<div class="a" style="left:0;top:37.5px;width:100%;height:1px;background:#fff;opacity:.45"></div>
<div class="a" style="left:0;top:63.5px;width:100%;height:3px;background:#bfe6e6"></div>
<div class="a" style="left:3.0px;top:53.5px;width:3.4px;height:3.4px;background:#5fc0c1"></div>
<div class="a" style="left:9.4px;top:53.5px;width:3.4px;height:3.4px;background:#5fc0c1"></div>
<div class="a" style="left:15.8px;top:53.5px;width:3.4px;height:3.4px;background:#5fc0c1"></div>
<div class="a" style="left:0;top:224.5px;width:100%;height:1.6px;background:rgba(255,255,255,.38)"></div>
<svg class="a" style="left:0;top:0" width="42" height="41" viewBox="0 0 42 41"><defs><filter id="bl" x="-5%" y="-5%" width="110%" height="110%"><feGaussianBlur stdDeviation="0.4"/></filter><radialGradient id="fg" cx="0.5" cy="0.4" r="0.62"><stop offset="0" stop-color="#eeeeee"/><stop offset="0.65" stop-color="#dedede"/><stop offset="1" stop-color="#c4c4c4"/></radialGradient></defs><g filter="url(#bl)"><rect width="42" height="41" fill="#d8d8d8"/><path d="M33 0H42V41H37L39 33L33 27L35 19L36 10Z" fill="#1b1b1b"/><path d="M36.5 6Q39.5 18 37.5 30L35.5 24L36.5 12Z" fill="#383838"/><rect x="40.5" y="0" width="1.5" height="41" fill="#101010"/><path d="M0 0H35L36.5 8L35 17L30 8L20 7L11 11L9 23L3 25L0 23Z" fill="#e9e9e9"/><circle cx="16.1" cy="5.5" r="0.77" fill="#111"/><circle cx="29.8" cy="4.7" r="0.57" fill="#2a2a2a"/><circle cx="17.7" cy="5.8" r="0.73" fill="#1a1a1a"/><circle cx="8.4" cy="5.1" r="0.60" fill="#1a1a1a"/><circle cx="21.3" cy="7.6" r="1.00" fill="#2a2a2a"/><circle cx="5.7" cy="3.2" r="0.88" fill="#1a1a1a"/><circle cx="5.6" cy="7.8" r="0.84" fill="#111"/><circle cx="23.1" cy="0.9" r="0.79" fill="#2a2a2a"/><circle cx="22.0" cy="6.0" r="0.90" fill="#111"/><circle cx="7.6" cy="0.6" r="0.56" fill="#111"/><circle cx="18.3" cy="1.0" r="0.79" fill="#2a2a2a"/><circle cx="8.5" cy="2.7" r="0.71" fill="#111"/><circle cx="3.9" cy="4.7" r="0.59" fill="#2a2a2a"/><circle cx="15.8" cy="8.1" r="0.92" fill="#1a1a1a"/><circle cx="18.1" cy="6.3" r="0.95" fill="#2a2a2a"/><circle cx="17.5" cy="6.5" r="0.73" fill="#444"/><circle cx="16.3" cy="3.0" r="1.00" fill="#444"/><circle cx="12.1" cy="2.6" r="1.02" fill="#111"/><circle cx="11.4" cy="1.1" r="0.98" fill="#111"/><circle cx="25.2" cy="4.1" r="0.86" fill="#444"/><circle cx="27.6" cy="4.0" r="0.74" fill="#111"/><circle cx="3.0" cy="2.4" r="0.85" fill="#111"/><circle cx="29.4" cy="4.7" r="0.60" fill="#111"/><circle cx="31.4" cy="4.1" r="1.05" fill="#444"/><circle cx="5.1" cy="6.2" r="0.91" fill="#444"/><circle cx="25.6" cy="2.9" r="1.02" fill="#444"/><circle cx="5.5" cy="3.5" r="0.77" fill="#111"/><circle cx="6.4" cy="2.7" r="0.81" fill="#111"/><circle cx="5.9" cy="1.0" r="0.71" fill="#111"/><circle cx="26.1" cy="2.1" r="0.79" fill="#1a1a1a"/><circle cx="19.2" cy="4.5" r="1.03" fill="#111"/><circle cx="8.5" cy="7.1" r="0.80" fill="#444"/><circle cx="6.8" cy="6.3" r="0.68" fill="#111"/><circle cx="6.4" cy="4.3" r="0.73" fill="#1a1a1a"/><circle cx="9.2" cy="2.9" r="0.89" fill="#1a1a1a"/><circle cx="4.5" cy="12.5" r="0.81" fill="#2a2a2a"/><circle cx="3.5" cy="23.8" r="0.88" fill="#444"/><circle cx="4.5" cy="9.9" r="0.80" fill="#1a1a1a"/><circle cx="9.8" cy="11.3" r="0.71" fill="#2a2a2a"/><circle cx="5.3" cy="6.4" r="0.65" fill="#444"/><circle cx="3.4" cy="16.1" r="0.95" fill="#1a1a1a"/><circle cx="4.8" cy="16.4" r="0.99" fill="#444"/><circle cx="6.0" cy="13.6" r="0.66" fill="#2a2a2a"/><circle cx="4.2" cy="7.9" r="0.65" fill="#1a1a1a"/><circle cx="4.9" cy="8.6" r="0.80" fill="#111"/><circle cx="6.5" cy="7.0" r="0.91" fill="#2a2a2a"/><circle cx="2.9" cy="23.3" r="0.96" fill="#111"/><circle cx="4.8" cy="18.4" r="0.78" fill="#2a2a2a"/><circle cx="4.9" cy="20.7" r="1.01" fill="#444"/><circle cx="8.2" cy="10.6" r="0.74" fill="#444"/><circle cx="4.2" cy="18.7" r="0.89" fill="#444"/><circle cx="3.2" cy="9.3" r="0.71" fill="#111"/><circle cx="8.3" cy="10.3" r="0.69" fill="#111"/><circle cx="2.7" cy="10.1" r="0.89" fill="#2a2a2a"/><path d="M31.5 3Q36.5 10 33.5 18" stroke="#f6f6f6" stroke-width="2.2" fill="none"/><rect x="0.6" y="0.6" width="2.4" height="25" fill="#161616"/><ellipse cx="21.5" cy="19.5" rx="11.5" ry="12" fill="url(#fg)"/><path d="M14 18.5Q17 20.5 20 19" stroke="#1e1e1e" stroke-width="1.3" fill="none"/><path d="M25 18.5Q27.5 20 30 18" stroke="#262626" stroke-width="1.2" fill="none"/><path d="M18 27Q20.5 28.2 23 27" stroke="#8a8a8a" stroke-width="0.9" fill="none"/><path d="M21.5 21Q23.5 24 22 25" stroke="#aaa" stroke-width="0.7" fill="none"/><path d="M0 25L4 25.5L10 30L16 33L16 41H0Z" fill="#e4e4e4"/><path d="M1.5 23.5Q7 26.5 11 30Q15 33 19 33.5" stroke="#111" stroke-width="1.6" fill="none"/><path d="M23 25L31 24L38 31L36 41H22L21 32Z" fill="#e8e8e8"/><path d="M26 28L35 33M24 31L33 38M23 35L28 41" stroke="#b0b0b0" stroke-width="0.8" fill="none"/><path d="M16 33L21 32L22 41H16Z" fill="#888"/><circle cx="17.5" cy="36" r="1.6" fill="#111"/><circle cx="20" cy="37" r="1.3" fill="#f2f2f2"/><circle cx="18" cy="39.5" r="1" fill="#333"/><rect x="5" y="27" width="1" height="14" fill="#c8c8c8"/></g></svg>
</div>
<div class="a" style="left:530.8px;top:186.5px;width:41.6px;height:237.5px;background:#74a538;box-shadow:inset 1px 0 0 #649a28,inset -1px 0 0 #649a28,inset 0 -1px 0 #649a28">
<div class="a" style="left:0;top:38.5px;width:100%;height:21px;background:#cadfb1"></div>
<div class="a" style="left:0;top:37.5px;width:100%;height:1px;background:#fff;opacity:.45"></div>
<div class="a" style="left:0;top:63.5px;width:100%;height:3px;background:#cadfb1"></div>
<div class="a" style="left:3.0px;top:53.5px;width:3.4px;height:3.4px;background:#74a538"></div>
<div class="a" style="left:9.4px;top:53.5px;width:3.4px;height:3.4px;background:#74a538"></div>
<div class="a" style="left:15.8px;top:53.5px;width:3.4px;height:3.4px;background:#74a538"></div>
<div class="a" style="left:0;top:224.5px;width:100%;height:1.6px;background:rgba(255,255,255,.38)"></div>
<div class="a" style="left:-479.8px;top:13.7px;width:1000px;text-align:center;color:#f4f4f4;font-size:40.5px;line-height:51px;transform:scale(0.1);transform-origin:500px 0;white-space:nowrap">Click to<br>add photo</div>
</div>
<div class="a" style="left:580.2px;top:186.5px;width:41.6px;height:237.5px;background:#e45a34;box-shadow:inset 1px 0 0 #d94d27,inset -1px 0 0 #d94d27,inset 0 -1px 0 #d94d27">
<div class="a" style="left:0;top:38.5px;width:100%;height:21px;background:#f5c1b0"></div>
<div class="a" style="left:0;top:37.5px;width:100%;height:1px;background:#fff;opacity:.45"></div>
<div class="a" style="left:0;top:63.5px;width:100%;height:3px;background:#f5c1b0"></div>
<div class="a" style="left:3.0px;top:53.5px;width:3.4px;height:3.4px;background:#e45a34"></div>
<div class="a" style="left:9.4px;top:53.5px;width:3.4px;height:3.4px;background:#e45a34"></div>
<div class="a" style="left:15.8px;top:53.5px;width:3.4px;height:3.4px;background:#e45a34"></div>
<div class="a" style="left:0;top:224.5px;width:100%;height:1.6px;background:rgba(255,255,255,.38)"></div>
<div class="a" style="left:-479.8px;top:13.7px;width:1000px;text-align:center;color:#f4f4f4;font-size:40.5px;line-height:51px;transform:scale(0.1);transform-origin:500px 0;white-space:nowrap">Click to<br>add photo</div>
</div>
<div class="a" style="left:629.1px;top:186.5px;width:41.6px;height:237.5px;background:#efd55a;box-shadow:inset 1px 0 0 #e6c94a,inset -1px 0 0 #e6c94a,inset 0 -1px 0 #e6c94a">
<div class="a" style="left:0;top:38.5px;width:100%;height:21px;background:#f8edb7"></div>
<div class="a" style="left:0;top:37.5px;width:100%;height:1px;background:#fff;opacity:.45"></div>
<div class="a" style="left:0;top:63.5px;width:100%;height:3px;background:#f8edb7"></div>
<div class="a" style="left:3.0px;top:53.5px;width:3.4px;height:3.4px;background:#efd55a"></div>
<div class="a" style="left:9.4px;top:53.5px;width:3.4px;height:3.4px;background:#efd55a"></div>
<div class="a" style="left:15.8px;top:53.5px;width:3.4px;height:3.4px;background:#efd55a"></div>
<div class="a" style="left:0;top:224.5px;width:100%;height:1.6px;background:rgba(255,255,255,.38)"></div>
<div class="a" style="left:-479.8px;top:13.7px;width:1000px;text-align:center;color:#f4f4f4;font-size:40.5px;line-height:51px;transform:scale(0.1);transform-origin:500px 0;white-space:nowrap">Click to<br>add photo</div>
</div>
<div class="a" style="left:678px;top:186.5px;width:41.6px;height:237.5px;background:#5fc0c1;box-shadow:inset 1px 0 0 #4db5b6,inset -1px 0 0 #4db5b6,inset 0 -1px 0 #4db5b6">
<div class="a" style="left:0;top:38.5px;width:100%;height:21px;background:#bfe6e6"></div>
<div class="a" style="left:0;top:37.5px;width:100%;height:1px;background:#fff;opacity:.45"></div>
<div class="a" style="left:0;top:63.5px;width:100%;height:3px;background:#bfe6e6"></div>
<div class="a" style="left:3.0px;top:53.5px;width:3.4px;height:3.4px;background:#5fc0c1"></div>
<div class="a" style="left:9.4px;top:53.5px;width:3.4px;height:3.4px;background:#5fc0c1"></div>
<div class="a" style="left:15.8px;top:53.5px;width:3.4px;height:3.4px;background:#5fc0c1"></div>
<div class="a" style="left:0;top:224.5px;width:100%;height:1.6px;background:rgba(255,255,255,.38)"></div>
<div class="a" style="left:-479.8px;top:13.7px;width:1000px;text-align:center;color:#f4f4f4;font-size:40.5px;line-height:51px;transform:scale(0.1);transform-origin:500px 0;white-space:nowrap">Click to<br>add photo</div>
</div>
</body></html>
